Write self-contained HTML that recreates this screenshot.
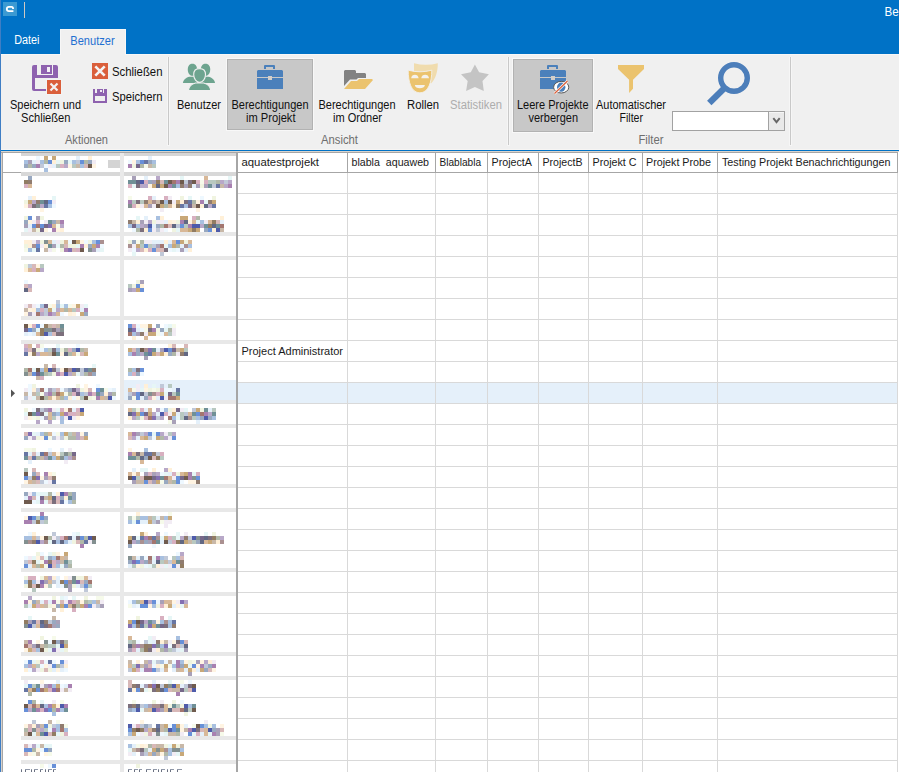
<!DOCTYPE html>
<html><head><meta charset="utf-8"><style>
html,body{margin:0;padding:0;background:#fff;overflow:hidden;width:899px;height:772px}
svg{display:block;font-family:'Liberation Sans', sans-serif}
text{font-family:'Liberation Sans', sans-serif}
</style></head><body>
<svg width="899" height="772" viewBox="0 0 899 772">
<rect x="0" y="0" width="899" height="772" fill="#ffffff" />
<rect x="0" y="0" width="899" height="54" fill="#0072C6" />
<rect x="0" y="54" width="899" height="96" fill="#F0F0F0" />
<rect x="0" y="54" width="899" height="1" fill="#F7F7F7" />
<rect x="0" y="149" width="899" height="1" fill="#F7F5F3" />
<rect x="0" y="150" width="899" height="1" fill="#0072C6" />
<rect x="0" y="151" width="899" height="1" fill="#DAD4CE" />
<rect x="0" y="0" width="1" height="772" fill="#3F7EC4" />
<rect x="3" y="2" width="14" height="14" fill="#3C9AD2" />
<path d="M13.4 11.1 H9 Q6.8 11.1 6.8 8.95 Q6.8 6.8 9 6.8 H11.6 Q13.1 6.8 13.1 8.9" fill="none" stroke="#fff" stroke-width="1.8"/>
<rect x="24" y="2" width="1" height="16" fill="#CFC8C2" />
<text x="884.5" y="16" font-size="12" fill="#ffffff" textLength="81" lengthAdjust="spacingAndGlyphs" >Berechtigungen</text>
<text x="14.3" y="44" font-size="12" fill="#ffffff" textLength="25.2" lengthAdjust="spacingAndGlyphs" >Datei</text>
<rect x="60" y="29" width="66" height="25" fill="#F7F7F7" />
<rect x="61" y="30" width="64" height="25" fill="#F0F0F0" />
<text x="70.3" y="45" font-size="12" fill="#1F6FD0" textLength="44.3" lengthAdjust="spacingAndGlyphs" >Benutzer</text>
<g>
<path d="M32 67 Q32 65 34 65 H37 V75 H53 V65 H56 Q58 65 58 67 V79 H47 V89 H35 V78 H58 V79 H47 V91 H34 Q32 91 32 89 Z" fill="#8E62AF" fill-rule="evenodd"/>
<rect x="41" y="65" width="11" height="9" fill="#8E62AF"/>
<rect x="47" y="67" width="3" height="5" fill="#F4F0F6"/>
<rect x="46" y="79" width="16" height="16" fill="#F3F3F3"/>
<rect x="47" y="80" width="14" height="14" fill="#DA5F3B"/>
<path d="M50.5 83.5 L57.5 90.5 M57.5 83.5 L50.5 90.5" stroke="#F2F2F2" stroke-width="2.2"/>
</g>
<text x="10" y="109" font-size="12" fill="#111111" textLength="71" lengthAdjust="spacingAndGlyphs" >Speichern und</text>
<text x="21" y="122" font-size="12" fill="#111111" textLength="49.5" lengthAdjust="spacingAndGlyphs" >Schließen</text>
<rect x="92" y="63" width="16" height="16" fill="#DA5F3B"/>
<path d="M95.3 66.3 L104.7 75.7 M104.7 66.3 L95.3 75.7" stroke="#F4F4F4" stroke-width="2.6"/>
<text x="112" y="76" font-size="12" fill="#111111" textLength="50.5" lengthAdjust="spacingAndGlyphs" >Schließen</text>
<path d="M93 89 H107 V103 H93 Z M95 96 V101 H105 V96 Z" fill="#8E62AF" fill-rule="evenodd"/>
<rect x="95" y="89" width="2" height="4" fill="#F0F0F0"/>
<rect x="103" y="89" width="1" height="4" fill="#F0F0F0"/>
<rect x="100" y="90" width="2" height="2" fill="#F0EAF4"/>
<text x="112" y="101" font-size="12" fill="#111111" textLength="50.5" lengthAdjust="spacingAndGlyphs" >Speichern</text>
<text x="65" y="144" font-size="12" fill="#6E6E6E" textLength="43" lengthAdjust="spacingAndGlyphs" >Aktionen</text>
<rect x="167" y="57" width="3" height="89" fill="#F6F6F6" />
<rect x="168" y="57" width="1" height="88" fill="#C9C9C9" />
<g fill="#6DA48F">
<path d="M187.8 69.5 C187.8 65.5 190 63.8 192.4 63.8 C194.8 63.8 197 65.5 197 69.5 C197 73.5 194.8 75.8 192.4 75.8 C190 75.8 187.8 73.5 187.8 69.5 Z"/>
<path d="M200.9 69.5 C200.9 65.5 203.1 63.8 205.5 63.8 C207.9 63.8 210.2 65.5 210.2 69.5 C210.2 73.5 207.9 75.8 205.5 75.8 C203.1 75.8 200.9 73.5 200.9 69.5 Z"/>
<path d="M182.9 83 C183.3 79.5 186 77.5 189.5 76.7 L195 76.7 L197.5 83 Z"/>
<path d="M215 83 C214.6 79.5 211.9 77.5 208.4 76.7 L203 76.7 L200.5 83 Z"/>
</g>
<g stroke="#F0F0F0" stroke-width="1.1" fill="#6DA48F">
<path d="M193.7 74.5 C193.7 70.5 196.3 68.6 199.6 68.6 C202.9 68.6 205.5 70.5 205.5 74.5 C205.5 79 202.6 82.2 199.6 82.2 C196.6 82.2 193.7 79 193.7 74.5 Z"/>
<path d="M188.4 90.6 C188.8 86.5 191.5 84 195.5 83 L203.7 83 C207.7 84 210.4 86.5 210.8 90.6 Z"/>
</g>
<text x="177" y="109" font-size="12" fill="#111111" textLength="44" lengthAdjust="spacingAndGlyphs" >Benutzer</text>
<rect x="226" y="58" width="88" height="73" fill="#F8F8F8" />
<rect x="227" y="59" width="86" height="71" fill="#B2B2B2" />
<rect x="228" y="60" width="84" height="69" fill="#C8C8C8" />
<g fill="#4B80BB">
<path d="M264 69 V66 Q264 65 265 65 H274 Q275 65 275 66 V69 H273 V67 H266 V69 Z"/>
<path d="M257 71 L258 70 H282 L283 71 V77 H257 Z"/>
<rect x="257" y="78" width="26" height="11"/>
</g>
<rect x="268" y="76" width="4" height="4" fill="#D3CEC9"/>
<text x="231.5" y="109" font-size="12" fill="#111111" textLength="77" lengthAdjust="spacingAndGlyphs" >Berechtigungen</text>
<text x="246" y="122" font-size="12" fill="#111111" textLength="49.5" lengthAdjust="spacingAndGlyphs" >im Projekt</text>
<path d="M344 71 L345 70 H355 L356 71 V73 H365 L366 74 V78 H358 L356.5 79.5 H350 L344 86 Z" fill="#828282"/>
<path d="M344 89 L351 81 H357 L359 79 H372 L373 80 L365 89 Z" fill="#EBC36E"/>
<text x="318.5" y="109" font-size="12" fill="#111111" textLength="77" lengthAdjust="spacingAndGlyphs" >Berechtigungen</text>
<text x="333" y="122" font-size="12" fill="#111111" textLength="49" lengthAdjust="spacingAndGlyphs" >im Ordner</text>
<path d="M414 63.2 Q426 66.3 437.8 63.2 C437.8 72 435.5 79 431 83.5 L424 72 L414 71 Z" fill="#F0DCAE"/>
<path d="M408.2 70.2 Q420 73.4 431.8 70.2 C431.8 82 428.5 92.8 419.9 92.8 C411.3 92.8 408.2 82 408.2 70.2 Z" fill="#EBC36E" stroke="#F2EFEA" stroke-width="0.9"/>
<path d="M411.2 78.2 C411.4 73.6 418.4 73.6 418.6 78.2 Z M421.3 78.2 C421.5 73.6 428.8 73.6 429 78.2 Z M414.8 85 H424.9 C424.6 89.4 415.1 89.4 414.8 85 Z" fill="#F5F2EC"/>
<text x="407" y="109" font-size="12" fill="#111111" textLength="32" lengthAdjust="spacingAndGlyphs" >Rollen</text>
<path d="M474.9 64.5 L479.1 72.2 L488.9 74.3 L482.5 81 L483.8 90.9 L474.9 87 L466.1 90.9 L467.7 81 L461 74.3 L470.8 72.2 Z" fill="#C4C4C4"/>
<text x="450" y="109" font-size="12" fill="#ADADAD" textLength="52" lengthAdjust="spacingAndGlyphs" >Statistiken</text>
<text x="321" y="144" font-size="12" fill="#6E6E6E" textLength="37" lengthAdjust="spacingAndGlyphs" >Ansicht</text>
<rect x="507" y="57" width="3" height="89" fill="#F6F6F6" />
<rect x="508" y="57" width="1" height="88" fill="#C9C9C9" />
<rect x="512" y="58" width="82" height="75" fill="#F8F8F8" />
<rect x="513" y="59" width="80" height="73" fill="#B2B2B2" />
<rect x="514" y="60" width="78" height="71" fill="#C8C8C8" />
<g fill="#4B80BB">
<path d="M547 69 V66 Q547 65 548 65 H557 Q558 65 558 66 V69 H556 V67 H549 V69 Z"/>
<path d="M540 71 L541 70 H565 L566 71 V77 H540 Z"/>
<rect x="540" y="78" width="26" height="11"/>
</g>
<rect x="551" y="76" width="4" height="4" fill="#D3CEC9"/>
<ellipse cx="561.2" cy="87.2" rx="7.6" ry="5.8" fill="#FFFFFF" stroke="#5A5A5A" stroke-width="1"/>
<ellipse cx="561.2" cy="87.2" rx="4.2" ry="4.6" fill="#4B80BB"/>
<path d="M554.5 93.5 L567.5 81" stroke="#FFFFFF" stroke-width="2.6"/>
<path d="M554.5 93.5 L567.5 81" stroke="#D9603B" stroke-width="1.3"/>
<text x="517" y="109" font-size="12" fill="#111111" textLength="71.5" lengthAdjust="spacingAndGlyphs" >Leere Projekte</text>
<text x="528.5" y="122" font-size="12" fill="#111111" textLength="49.5" lengthAdjust="spacingAndGlyphs" >verbergen</text>
<path d="M618 64.9 H644 V68.9 L633 79.8 V88.7 L629.1 92.9 V79.8 L618 68.9 Z" fill="#EBC36E"/>
<text x="596" y="109" font-size="12" fill="#111111" textLength="70" lengthAdjust="spacingAndGlyphs" >Automatischer</text>
<text x="619.5" y="122" font-size="12" fill="#111111" textLength="23.5" lengthAdjust="spacingAndGlyphs" >Filter</text>
<circle cx="734" cy="78" r="13.3" fill="none" stroke="#4C7EBA" stroke-width="5.4"/>
<path d="M724 88.5 L709.3 103" stroke="#4C7EBA" stroke-width="6.3"/>
<rect x="672.5" y="111.5" width="112" height="19" fill="#FFFFFF" stroke="#A2A2A2" stroke-width="1"/>
<rect x="769" y="112" width="15" height="18" fill="#E9E9E9"/>
<rect x="769" y="112" width="15" height="1" fill="#F6F6F6"/>
<rect x="768" y="111" width="1" height="20" fill="#A2A2A2"/>
<path d="M773.3 118.2 L776.5 122.2 L779.7 118.2" fill="none" stroke="#666" stroke-width="1.9"/>
<text x="638.5" y="144" font-size="12" fill="#6E6E6E" textLength="25" lengthAdjust="spacingAndGlyphs" >Filter</text>
<rect x="789" y="57" width="3" height="89" fill="#F6F6F6" />
<rect x="790" y="57" width="1" height="88" fill="#C9C9C9" />
<rect x="1" y="152" width="1" height="620" fill="#D8D2CC" />
<rect x="2" y="152" width="1" height="620" fill="#A6A6A6" />
<rect x="1" y="152" width="898" height="1" fill="#A6A6A6" />
<rect x="238" y="193" width="659" height="1" fill="#D9D9D9" />
<rect x="238" y="214" width="659" height="1" fill="#D9D9D9" />
<rect x="238" y="235" width="659" height="1" fill="#D9D9D9" />
<rect x="238" y="256" width="659" height="1" fill="#D9D9D9" />
<rect x="238" y="277" width="659" height="1" fill="#D9D9D9" />
<rect x="238" y="298" width="659" height="1" fill="#D9D9D9" />
<rect x="238" y="319" width="659" height="1" fill="#D9D9D9" />
<rect x="238" y="340" width="659" height="1" fill="#D9D9D9" />
<rect x="238" y="361" width="659" height="1" fill="#D9D9D9" />
<rect x="238" y="382" width="659" height="1" fill="#D9D9D9" />
<rect x="238" y="403" width="659" height="1" fill="#D9D9D9" />
<rect x="238" y="424" width="659" height="1" fill="#D9D9D9" />
<rect x="238" y="445" width="659" height="1" fill="#D9D9D9" />
<rect x="238" y="466" width="659" height="1" fill="#D9D9D9" />
<rect x="238" y="487" width="659" height="1" fill="#D9D9D9" />
<rect x="238" y="508" width="659" height="1" fill="#D9D9D9" />
<rect x="238" y="529" width="659" height="1" fill="#D9D9D9" />
<rect x="238" y="550" width="659" height="1" fill="#D9D9D9" />
<rect x="238" y="571" width="659" height="1" fill="#D9D9D9" />
<rect x="238" y="592" width="659" height="1" fill="#D9D9D9" />
<rect x="238" y="613" width="659" height="1" fill="#D9D9D9" />
<rect x="238" y="634" width="659" height="1" fill="#D9D9D9" />
<rect x="238" y="655" width="659" height="1" fill="#D9D9D9" />
<rect x="238" y="676" width="659" height="1" fill="#D9D9D9" />
<rect x="238" y="697" width="659" height="1" fill="#D9D9D9" />
<rect x="238" y="718" width="659" height="1" fill="#D9D9D9" />
<rect x="238" y="739" width="659" height="1" fill="#D9D9D9" />
<rect x="238" y="760" width="659" height="1" fill="#D9D9D9" />
<rect x="238" y="383" width="659" height="20" fill="#E5F0FA" />
<rect x="347" y="173" width="1" height="599" fill="#D9D9D9" />
<rect x="435" y="173" width="1" height="599" fill="#D9D9D9" />
<rect x="487" y="173" width="1" height="599" fill="#D9D9D9" />
<rect x="538" y="173" width="1" height="599" fill="#D9D9D9" />
<rect x="588" y="173" width="1" height="599" fill="#D9D9D9" />
<rect x="642" y="173" width="1" height="599" fill="#D9D9D9" />
<rect x="717" y="173" width="1" height="599" fill="#D9D9D9" />
<rect x="897" y="173" width="1" height="599" fill="#D9D9D9" />
<rect x="238" y="172" width="660" height="1" fill="#A6A6A6" />
<rect x="347" y="153" width="1" height="20" fill="#A6A6A6" />
<rect x="435" y="153" width="1" height="20" fill="#A6A6A6" />
<rect x="487" y="153" width="1" height="20" fill="#A6A6A6" />
<rect x="538" y="153" width="1" height="20" fill="#A6A6A6" />
<rect x="588" y="153" width="1" height="20" fill="#A6A6A6" />
<rect x="642" y="153" width="1" height="20" fill="#A6A6A6" />
<rect x="717" y="153" width="1" height="20" fill="#A6A6A6" />
<rect x="897" y="153" width="1" height="20" fill="#A6A6A6" />
<rect x="236" y="153" width="2" height="619" fill="#A6A6A6" />
<text x="241.5" y="166" font-size="11" fill="#1A1A1A" textLength="77.5" lengthAdjust="spacingAndGlyphs" >aquatestprojekt</text>
<text x="351.5" y="166" font-size="11" fill="#1A1A1A" textLength="77.5" lengthAdjust="spacingAndGlyphs" >blabla  aquaweb</text>
<text x="439.5" y="166" font-size="11" fill="#1A1A1A" textLength="41.5" lengthAdjust="spacingAndGlyphs" >Blablabla</text>
<text x="491.5" y="166" font-size="11" fill="#1A1A1A" textLength="40.5" lengthAdjust="spacingAndGlyphs" >ProjectA</text>
<text x="542.5" y="166" font-size="11" fill="#1A1A1A" textLength="40" lengthAdjust="spacingAndGlyphs" >ProjectB</text>
<text x="592.5" y="166" font-size="11" fill="#1A1A1A" textLength="44" lengthAdjust="spacingAndGlyphs" >Projekt C</text>
<text x="646" y="166" font-size="11" fill="#1A1A1A" textLength="65" lengthAdjust="spacingAndGlyphs" >Projekt Probe</text>
<text x="722" y="166" font-size="11" fill="#1A1A1A" textLength="168.5" lengthAdjust="spacingAndGlyphs" >Testing Projekt Benachrichtigungen</text>
<text x="241.5" y="355" font-size="11" fill="#1A1A1A" textLength="101.5" lengthAdjust="spacingAndGlyphs" >Project Administrator</text>
<rect x="898" y="152" width="1" height="620" fill="#FFFFFF" />
<rect x="21" y="153" width="215" height="3" fill="#D6D6D6" />
<rect x="3" y="172" width="18" height="1" fill="#A8A8A8" />
<rect x="21" y="172" width="215" height="4" fill="#D8D8D8" />
<rect x="21" y="232" width="215" height="4" fill="#E8E8E8" />
<rect x="21" y="256" width="215" height="4" fill="#E8E8E8" />
<rect x="21" y="316" width="215" height="4" fill="#E8E8E8" />
<rect x="21" y="340" width="215" height="4" fill="#E8E8E8" />
<rect x="21" y="400" width="215" height="4" fill="#E8E8E8" />
<rect x="21" y="424" width="215" height="4" fill="#E8E8E8" />
<rect x="21" y="484" width="215" height="4" fill="#E8E8E8" />
<rect x="21" y="508" width="215" height="4" fill="#E8E8E8" />
<rect x="21" y="568" width="215" height="4" fill="#E8E8E8" />
<rect x="21" y="592" width="215" height="4" fill="#E8E8E8" />
<rect x="21" y="652" width="215" height="4" fill="#E8E8E8" />
<rect x="21" y="676" width="215" height="4" fill="#E8E8E8" />
<rect x="21" y="736" width="215" height="4" fill="#E8E8E8" />
<rect x="21" y="760" width="215" height="4" fill="#E8E8E8" />
<rect x="120" y="153" width="4" height="619" fill="#E9E9E9" />
<rect x="124" y="380" width="112" height="20" fill="#E5F0FA" />
<path d="M11 389.5 L15 393.3 L11 397.2 Z" fill="#555555"/>
<rect x="36" y="156" width="4" height="4" fill="#EEF8FF" />
<rect x="44" y="156" width="4" height="4" fill="#C8A878" />
<rect x="52" y="156" width="4" height="4" fill="#C8A878" />
<rect x="76" y="156" width="4" height="4" fill="#E4F0FA" />
<rect x="88" y="156" width="4" height="4" fill="#FFF0D8" />
<rect x="24" y="160" width="4" height="4" fill="#A8C0E0" />
<rect x="28" y="160" width="4" height="4" fill="#A8A0B8" />
<rect x="32" y="160" width="4" height="4" fill="#E4F0FA" />
<rect x="36" y="160" width="4" height="4" fill="#F2ECF4" />
<rect x="40" y="160" width="4" height="4" fill="#A8C0E0" />
<rect x="44" y="160" width="4" height="4" fill="#B0B8A8" />
<rect x="48" y="160" width="4" height="4" fill="#6890D8" />
<rect x="52" y="160" width="4" height="4" fill="#FFF0D8" />
<rect x="56" y="160" width="4" height="4" fill="#E6F6F6" />
<rect x="60" y="160" width="4" height="4" fill="#F0F4E0" />
<rect x="64" y="160" width="4" height="4" fill="#98A8C0" />
<rect x="68" y="160" width="4" height="4" fill="#E6F6F6" />
<rect x="72" y="160" width="4" height="4" fill="#A8C0E0" />
<rect x="76" y="160" width="4" height="4" fill="#C0C8D8" />
<rect x="80" y="160" width="4" height="4" fill="#6890D8" />
<rect x="84" y="160" width="4" height="4" fill="#B0B8A8" />
<rect x="88" y="160" width="4" height="4" fill="#98A8C0" />
<rect x="92" y="160" width="4" height="4" fill="#F2ECF4" />
<rect x="24" y="164" width="4" height="4" fill="#98A8C0" />
<rect x="28" y="164" width="4" height="4" fill="#B0B8A8" />
<rect x="32" y="164" width="4" height="4" fill="#98A8C0" />
<rect x="36" y="164" width="4" height="4" fill="#A880B0" />
<rect x="40" y="164" width="4" height="4" fill="#C0C8D8" />
<rect x="44" y="164" width="4" height="4" fill="#EEF8FF" />
<rect x="48" y="164" width="4" height="4" fill="#F2ECF4" />
<rect x="52" y="164" width="4" height="4" fill="#E4F0FA" />
<rect x="56" y="164" width="4" height="4" fill="#B8C8C0" />
<rect x="60" y="164" width="4" height="4" fill="#D8B0C0" />
<rect x="64" y="164" width="4" height="4" fill="#B8A8C8" />
<rect x="68" y="164" width="4" height="4" fill="#FFF4E2" />
<rect x="72" y="164" width="4" height="4" fill="#B8C8C0" />
<rect x="76" y="164" width="4" height="4" fill="#C8B8A8" />
<rect x="80" y="164" width="4" height="4" fill="#A8C0E0" />
<rect x="84" y="164" width="4" height="4" fill="#D8B8B8" />
<rect x="88" y="164" width="4" height="4" fill="#6F5B4E" />
<rect x="92" y="164" width="4" height="4" fill="#FFF4E2" />
<rect x="44" y="168" width="4" height="4" fill="#A8C0E0" />
<rect x="108" y="160" width="12" height="8" fill="#D4D4D4" />
<rect x="148" y="156" width="4" height="4" fill="#E4F0FA" />
<rect x="128" y="160" width="4" height="4" fill="#EEF8FF" />
<rect x="132" y="160" width="4" height="4" fill="#FFF4E2" />
<rect x="136" y="160" width="4" height="4" fill="#A8C0E0" />
<rect x="140" y="160" width="4" height="4" fill="#6890D8" />
<rect x="144" y="160" width="4" height="4" fill="#6876A3" />
<rect x="148" y="160" width="4" height="4" fill="#98A8C0" />
<rect x="152" y="160" width="4" height="4" fill="#A8C0E0" />
<rect x="128" y="164" width="4" height="4" fill="#A880B0" />
<rect x="132" y="164" width="4" height="4" fill="#F0F4E0" />
<rect x="136" y="164" width="4" height="4" fill="#766889" />
<rect x="140" y="164" width="4" height="4" fill="#B0B8A8" />
<rect x="144" y="164" width="4" height="4" fill="#F6FAEA" />
<rect x="148" y="164" width="4" height="4" fill="#C8B8A8" />
<rect x="152" y="164" width="4" height="4" fill="#B8C8C0" />
<rect x="28" y="176" width="4" height="4" fill="#98A8C0" />
<rect x="24" y="180" width="4" height="4" fill="#917C62" />
<rect x="28" y="180" width="4" height="4" fill="#907C6F" />
<rect x="24" y="184" width="4" height="4" fill="#D8B0C0" />
<rect x="28" y="184" width="4" height="4" fill="#D8B898" />
<rect x="132" y="176" width="4" height="4" fill="#A8A0B8" />
<rect x="144" y="176" width="4" height="4" fill="#E4F0FA" />
<rect x="156" y="176" width="4" height="4" fill="#B8A8C8" />
<rect x="180" y="176" width="4" height="4" fill="#E6F6F6" />
<rect x="204" y="176" width="4" height="4" fill="#D8B898" />
<rect x="228" y="176" width="4" height="4" fill="#E6F6F6" />
<rect x="128" y="180" width="4" height="4" fill="#6F9096" />
<rect x="132" y="180" width="4" height="4" fill="#6F9096" />
<rect x="136" y="180" width="4" height="4" fill="#626883" />
<rect x="140" y="180" width="4" height="4" fill="#4E5BAA" />
<rect x="144" y="180" width="4" height="4" fill="#D8B0C0" />
<rect x="148" y="180" width="4" height="4" fill="#98A8C0" />
<rect x="152" y="180" width="4" height="4" fill="#A8A0B8" />
<rect x="156" y="180" width="4" height="4" fill="#917C62" />
<rect x="160" y="180" width="4" height="4" fill="#D8B8B8" />
<rect x="164" y="180" width="4" height="4" fill="#6F9096" />
<rect x="168" y="180" width="4" height="4" fill="#6F5B4E" />
<rect x="172" y="180" width="4" height="4" fill="#A3766F" />
<rect x="176" y="180" width="4" height="4" fill="#A880B0" />
<rect x="180" y="180" width="4" height="4" fill="#6F5B4E" />
<rect x="184" y="180" width="4" height="4" fill="#C0C8D8" />
<rect x="188" y="180" width="4" height="4" fill="#7C6F7C" />
<rect x="192" y="180" width="4" height="4" fill="#6F5B4E" />
<rect x="196" y="180" width="4" height="4" fill="#D8B0C0" />
<rect x="200" y="180" width="4" height="4" fill="#F6FAEA" />
<rect x="204" y="180" width="4" height="4" fill="#D8B0C0" />
<rect x="208" y="180" width="4" height="4" fill="#B8C8C0" />
<rect x="212" y="180" width="4" height="4" fill="#B8C8C0" />
<rect x="216" y="180" width="4" height="4" fill="#B0B8A8" />
<rect x="220" y="180" width="4" height="4" fill="#B8A8C8" />
<rect x="224" y="180" width="4" height="4" fill="#C0C8D8" />
<rect x="228" y="180" width="4" height="4" fill="#B8A8C8" />
<rect x="128" y="184" width="4" height="4" fill="#D8B0C0" />
<rect x="132" y="184" width="4" height="4" fill="#E6F6F6" />
<rect x="136" y="184" width="4" height="4" fill="#7C6F7C" />
<rect x="140" y="184" width="4" height="4" fill="#B8A8C8" />
<rect x="144" y="184" width="4" height="4" fill="#B8A8C8" />
<rect x="148" y="184" width="4" height="4" fill="#FFF4E2" />
<rect x="152" y="184" width="4" height="4" fill="#C8A878" />
<rect x="156" y="184" width="4" height="4" fill="#626883" />
<rect x="160" y="184" width="4" height="4" fill="#C8A878" />
<rect x="164" y="184" width="4" height="4" fill="#6F5B4E" />
<rect x="168" y="184" width="4" height="4" fill="#A880B0" />
<rect x="172" y="184" width="4" height="4" fill="#6F9096" />
<rect x="176" y="184" width="4" height="4" fill="#A8C0E0" />
<rect x="180" y="184" width="4" height="4" fill="#907C6F" />
<rect x="184" y="184" width="4" height="4" fill="#A8A0B8" />
<rect x="188" y="184" width="4" height="4" fill="#907C6F" />
<rect x="192" y="184" width="4" height="4" fill="#E4F0FA" />
<rect x="196" y="184" width="4" height="4" fill="#A8A0B8" />
<rect x="200" y="184" width="4" height="4" fill="#F0F4E0" />
<rect x="204" y="184" width="4" height="4" fill="#A8A0B8" />
<rect x="208" y="184" width="4" height="4" fill="#6F9096" />
<rect x="212" y="184" width="4" height="4" fill="#C0C8D8" />
<rect x="216" y="184" width="4" height="4" fill="#6876A3" />
<rect x="220" y="184" width="4" height="4" fill="#C8B8A8" />
<rect x="224" y="184" width="4" height="4" fill="#B8A8C8" />
<rect x="228" y="184" width="4" height="4" fill="#A880B0" />
<rect x="28" y="196" width="4" height="4" fill="#E4F0FA" />
<rect x="32" y="196" width="4" height="4" fill="#FFF0D8" />
<rect x="52" y="196" width="4" height="4" fill="#E6F6F6" />
<rect x="24" y="200" width="4" height="4" fill="#F0F4E0" />
<rect x="28" y="200" width="4" height="4" fill="#C8A878" />
<rect x="32" y="200" width="4" height="4" fill="#B8A8C8" />
<rect x="36" y="200" width="4" height="4" fill="#907C6F" />
<rect x="40" y="200" width="4" height="4" fill="#6F9096" />
<rect x="44" y="200" width="4" height="4" fill="#626883" />
<rect x="48" y="200" width="4" height="4" fill="#6890D8" />
<rect x="52" y="200" width="4" height="4" fill="#F2ECF4" />
<rect x="24" y="204" width="4" height="4" fill="#FFF4E2" />
<rect x="28" y="204" width="4" height="4" fill="#D8B0C0" />
<rect x="32" y="204" width="4" height="4" fill="#7C6F7C" />
<rect x="36" y="204" width="4" height="4" fill="#839090" />
<rect x="40" y="204" width="4" height="4" fill="#B8A8C8" />
<rect x="44" y="204" width="4" height="4" fill="#6876A3" />
<rect x="48" y="204" width="4" height="4" fill="#A8C0E0" />
<rect x="52" y="204" width="4" height="4" fill="#EEF8FF" />
<rect x="40" y="208" width="4" height="4" fill="#FFF4E2" />
<rect x="128" y="196" width="4" height="4" fill="#F6FAEA" />
<rect x="148" y="196" width="4" height="4" fill="#D8B0C0" />
<rect x="152" y="196" width="4" height="4" fill="#E4F0FA" />
<rect x="164" y="196" width="4" height="4" fill="#D8B0C0" />
<rect x="168" y="196" width="4" height="4" fill="#F2ECF4" />
<rect x="180" y="196" width="4" height="4" fill="#F0F4E0" />
<rect x="188" y="196" width="4" height="4" fill="#E6F6F6" />
<rect x="200" y="196" width="4" height="4" fill="#EEF8FF" />
<rect x="212" y="196" width="4" height="4" fill="#F0F4E0" />
<rect x="128" y="200" width="4" height="4" fill="#A880B0" />
<rect x="132" y="200" width="4" height="4" fill="#B8C8C0" />
<rect x="136" y="200" width="4" height="4" fill="#7C6F7C" />
<rect x="140" y="200" width="4" height="4" fill="#B8C8C0" />
<rect x="144" y="200" width="4" height="4" fill="#907C6F" />
<rect x="148" y="200" width="4" height="4" fill="#D8B898" />
<rect x="152" y="200" width="4" height="4" fill="#AA9090" />
<rect x="156" y="200" width="4" height="4" fill="#C8B8A8" />
<rect x="160" y="200" width="4" height="4" fill="#6F5B4E" />
<rect x="164" y="200" width="4" height="4" fill="#A8C0E0" />
<rect x="168" y="200" width="4" height="4" fill="#6F5B4E" />
<rect x="172" y="200" width="4" height="4" fill="#F2ECF4" />
<rect x="176" y="200" width="4" height="4" fill="#C8A878" />
<rect x="180" y="200" width="4" height="4" fill="#FFF0D8" />
<rect x="184" y="200" width="4" height="4" fill="#7C6F7C" />
<rect x="188" y="200" width="4" height="4" fill="#6876A3" />
<rect x="192" y="200" width="4" height="4" fill="#B0B8A8" />
<rect x="196" y="200" width="4" height="4" fill="#FFF4E2" />
<rect x="200" y="200" width="4" height="4" fill="#A880B0" />
<rect x="204" y="200" width="4" height="4" fill="#E6F6F6" />
<rect x="208" y="200" width="4" height="4" fill="#907C6F" />
<rect x="212" y="200" width="4" height="4" fill="#C8A878" />
<rect x="128" y="204" width="4" height="4" fill="#839090" />
<rect x="132" y="204" width="4" height="4" fill="#D8B0C0" />
<rect x="136" y="204" width="4" height="4" fill="#FFF0D8" />
<rect x="140" y="204" width="4" height="4" fill="#F2ECF4" />
<rect x="144" y="204" width="4" height="4" fill="#D8B898" />
<rect x="148" y="204" width="4" height="4" fill="#A8A0B8" />
<rect x="152" y="204" width="4" height="4" fill="#F2ECF4" />
<rect x="156" y="204" width="4" height="4" fill="#6F5B4E" />
<rect x="160" y="204" width="4" height="4" fill="#C8A878" />
<rect x="164" y="204" width="4" height="4" fill="#B0B8A8" />
<rect x="168" y="204" width="4" height="4" fill="#D8B898" />
<rect x="172" y="204" width="4" height="4" fill="#FFF4E2" />
<rect x="176" y="204" width="4" height="4" fill="#917C62" />
<rect x="180" y="204" width="4" height="4" fill="#6876A3" />
<rect x="184" y="204" width="4" height="4" fill="#A8C0E0" />
<rect x="188" y="204" width="4" height="4" fill="#766889" />
<rect x="192" y="204" width="4" height="4" fill="#C8B8A8" />
<rect x="196" y="204" width="4" height="4" fill="#6F5B4E" />
<rect x="200" y="204" width="4" height="4" fill="#FFF0D8" />
<rect x="204" y="204" width="4" height="4" fill="#626883" />
<rect x="208" y="204" width="4" height="4" fill="#B8A8C8" />
<rect x="212" y="204" width="4" height="4" fill="#6876A3" />
<rect x="160" y="208" width="4" height="4" fill="#F2ECF4" />
<rect x="180" y="208" width="4" height="4" fill="#EEF8FF" />
<rect x="196" y="208" width="4" height="4" fill="#FFF4E2" />
<rect x="24" y="216" width="4" height="4" fill="#F0F4E0" />
<rect x="28" y="216" width="4" height="4" fill="#6890D8" />
<rect x="36" y="216" width="4" height="4" fill="#A8A0B8" />
<rect x="40" y="216" width="4" height="4" fill="#F0F4E0" />
<rect x="24" y="220" width="4" height="4" fill="#98A8C0" />
<rect x="28" y="220" width="4" height="4" fill="#FFF4E2" />
<rect x="32" y="220" width="4" height="4" fill="#F2ECF4" />
<rect x="36" y="220" width="4" height="4" fill="#D8B0C0" />
<rect x="44" y="220" width="4" height="4" fill="#F2ECF4" />
<rect x="48" y="220" width="4" height="4" fill="#6F9096" />
<rect x="52" y="220" width="4" height="4" fill="#98A8C0" />
<rect x="56" y="220" width="4" height="4" fill="#C8B8A8" />
<rect x="60" y="220" width="4" height="4" fill="#A880B0" />
<rect x="24" y="224" width="4" height="4" fill="#A8A0B8" />
<rect x="28" y="224" width="4" height="4" fill="#E4F0FA" />
<rect x="32" y="224" width="4" height="4" fill="#6890D8" />
<rect x="36" y="224" width="4" height="4" fill="#A3766F" />
<rect x="40" y="224" width="4" height="4" fill="#6890D8" />
<rect x="44" y="224" width="4" height="4" fill="#766889" />
<rect x="48" y="224" width="4" height="4" fill="#836FB1" />
<rect x="52" y="224" width="4" height="4" fill="#D8B898" />
<rect x="56" y="224" width="4" height="4" fill="#F6FAEA" />
<rect x="60" y="224" width="4" height="4" fill="#B8A8C8" />
<rect x="24" y="228" width="4" height="4" fill="#E6F6F6" />
<rect x="28" y="228" width="4" height="4" fill="#F2ECF4" />
<rect x="32" y="228" width="4" height="4" fill="#C8B8A8" />
<rect x="36" y="228" width="4" height="4" fill="#F0F4E0" />
<rect x="40" y="228" width="4" height="4" fill="#766889" />
<rect x="44" y="228" width="4" height="4" fill="#FFF4E2" />
<rect x="52" y="228" width="4" height="4" fill="#A880B0" />
<rect x="56" y="228" width="4" height="4" fill="#FFF4E2" />
<rect x="60" y="228" width="4" height="4" fill="#FFF0D8" />
<rect x="136" y="216" width="4" height="4" fill="#E6F6F6" />
<rect x="144" y="216" width="4" height="4" fill="#E4F0FA" />
<rect x="156" y="216" width="4" height="4" fill="#A8C0E0" />
<rect x="160" y="216" width="4" height="4" fill="#FFF0D8" />
<rect x="180" y="216" width="4" height="4" fill="#C8A878" />
<rect x="184" y="216" width="4" height="4" fill="#C8A878" />
<rect x="192" y="216" width="4" height="4" fill="#D8B0C0" />
<rect x="196" y="216" width="4" height="4" fill="#B0B8A8" />
<rect x="220" y="216" width="4" height="4" fill="#FFF0D8" />
<rect x="128" y="220" width="4" height="4" fill="#907C6F" />
<rect x="132" y="220" width="4" height="4" fill="#C8B8A8" />
<rect x="136" y="220" width="4" height="4" fill="#FFF0D8" />
<rect x="140" y="220" width="4" height="4" fill="#A8A0B8" />
<rect x="144" y="220" width="4" height="4" fill="#F2ECF4" />
<rect x="148" y="220" width="4" height="4" fill="#B8A8C8" />
<rect x="152" y="220" width="4" height="4" fill="#F0F4E0" />
<rect x="156" y="220" width="4" height="4" fill="#F2ECF4" />
<rect x="160" y="220" width="4" height="4" fill="#F2ECF4" />
<rect x="164" y="220" width="4" height="4" fill="#E4F0FA" />
<rect x="168" y="220" width="4" height="4" fill="#FFF0D8" />
<rect x="172" y="220" width="4" height="4" fill="#FFF4E2" />
<rect x="176" y="220" width="4" height="4" fill="#F0F4E0" />
<rect x="180" y="220" width="4" height="4" fill="#A880B0" />
<rect x="184" y="220" width="4" height="4" fill="#626883" />
<rect x="188" y="220" width="4" height="4" fill="#FFF4E2" />
<rect x="192" y="220" width="4" height="4" fill="#D8B898" />
<rect x="196" y="220" width="4" height="4" fill="#E6F6F6" />
<rect x="200" y="220" width="4" height="4" fill="#A8C0E0" />
<rect x="204" y="220" width="4" height="4" fill="#F2ECF4" />
<rect x="208" y="220" width="4" height="4" fill="#D8B898" />
<rect x="212" y="220" width="4" height="4" fill="#917C62" />
<rect x="216" y="220" width="4" height="4" fill="#D8B8B8" />
<rect x="220" y="220" width="4" height="4" fill="#E4F0FA" />
<rect x="128" y="224" width="4" height="4" fill="#A8C0E0" />
<rect x="132" y="224" width="4" height="4" fill="#766889" />
<rect x="136" y="224" width="4" height="4" fill="#A8C0E0" />
<rect x="140" y="224" width="4" height="4" fill="#B8A8C8" />
<rect x="144" y="224" width="4" height="4" fill="#A8A0B8" />
<rect x="148" y="224" width="4" height="4" fill="#4E5BAA" />
<rect x="152" y="224" width="4" height="4" fill="#E4F0FA" />
<rect x="156" y="224" width="4" height="4" fill="#98A8C0" />
<rect x="160" y="224" width="4" height="4" fill="#B0B8A8" />
<rect x="164" y="224" width="4" height="4" fill="#A3766F" />
<rect x="168" y="224" width="4" height="4" fill="#D8B8B8" />
<rect x="172" y="224" width="4" height="4" fill="#626883" />
<rect x="176" y="224" width="4" height="4" fill="#C0C8D8" />
<rect x="180" y="224" width="4" height="4" fill="#6890D8" />
<rect x="184" y="224" width="4" height="4" fill="#B8C8C0" />
<rect x="188" y="224" width="4" height="4" fill="#A880B0" />
<rect x="192" y="224" width="4" height="4" fill="#4E5BAA" />
<rect x="196" y="224" width="4" height="4" fill="#4E5BAA" />
<rect x="200" y="224" width="4" height="4" fill="#B8A8C8" />
<rect x="204" y="224" width="4" height="4" fill="#6F9096" />
<rect x="208" y="224" width="4" height="4" fill="#917C62" />
<rect x="212" y="224" width="4" height="4" fill="#626883" />
<rect x="216" y="224" width="4" height="4" fill="#6F9096" />
<rect x="220" y="224" width="4" height="4" fill="#A3766F" />
<rect x="132" y="228" width="4" height="4" fill="#EEF8FF" />
<rect x="136" y="228" width="4" height="4" fill="#B0B8A8" />
<rect x="140" y="228" width="4" height="4" fill="#7C6F7C" />
<rect x="144" y="228" width="4" height="4" fill="#FFF0D8" />
<rect x="148" y="228" width="4" height="4" fill="#6890D8" />
<rect x="152" y="228" width="4" height="4" fill="#F2ECF4" />
<rect x="156" y="228" width="4" height="4" fill="#C0C8D8" />
<rect x="160" y="228" width="4" height="4" fill="#F2ECF4" />
<rect x="164" y="228" width="4" height="4" fill="#EEF8FF" />
<rect x="172" y="228" width="4" height="4" fill="#F0F4E0" />
<rect x="176" y="228" width="4" height="4" fill="#E6F6F6" />
<rect x="180" y="228" width="4" height="4" fill="#D8B898" />
<rect x="184" y="228" width="4" height="4" fill="#D8B898" />
<rect x="188" y="228" width="4" height="4" fill="#C8A878" />
<rect x="192" y="228" width="4" height="4" fill="#917C62" />
<rect x="196" y="228" width="4" height="4" fill="#C8A878" />
<rect x="204" y="228" width="4" height="4" fill="#98A8C0" />
<rect x="208" y="228" width="4" height="4" fill="#6890D8" />
<rect x="212" y="228" width="4" height="4" fill="#FFF0D8" />
<rect x="216" y="228" width="4" height="4" fill="#4E5BAA" />
<rect x="220" y="228" width="4" height="4" fill="#C8B8A8" />
<rect x="24" y="240" width="4" height="4" fill="#FFF0D8" />
<rect x="28" y="240" width="4" height="4" fill="#FFF0D8" />
<rect x="32" y="240" width="4" height="4" fill="#F2ECF4" />
<rect x="36" y="240" width="4" height="4" fill="#B8A8C8" />
<rect x="40" y="240" width="4" height="4" fill="#F0F4E0" />
<rect x="44" y="240" width="4" height="4" fill="#839090" />
<rect x="48" y="240" width="4" height="4" fill="#D8B898" />
<rect x="52" y="240" width="4" height="4" fill="#E4F0FA" />
<rect x="56" y="240" width="4" height="4" fill="#F2ECF4" />
<rect x="60" y="240" width="4" height="4" fill="#F0F4E0" />
<rect x="64" y="240" width="4" height="4" fill="#D8B898" />
<rect x="68" y="240" width="4" height="4" fill="#EEF8FF" />
<rect x="72" y="240" width="4" height="4" fill="#6F5B4E" />
<rect x="76" y="240" width="4" height="4" fill="#C8A878" />
<rect x="80" y="240" width="4" height="4" fill="#FFF4E2" />
<rect x="84" y="240" width="4" height="4" fill="#EEF8FF" />
<rect x="88" y="240" width="4" height="4" fill="#F0F4E0" />
<rect x="92" y="240" width="4" height="4" fill="#A8C0E0" />
<rect x="96" y="240" width="4" height="4" fill="#6890D8" />
<rect x="100" y="240" width="4" height="4" fill="#AA9090" />
<rect x="24" y="244" width="4" height="4" fill="#F0F4E0" />
<rect x="28" y="244" width="4" height="4" fill="#FFF0D8" />
<rect x="32" y="244" width="4" height="4" fill="#AA9090" />
<rect x="36" y="244" width="4" height="4" fill="#6890D8" />
<rect x="40" y="244" width="4" height="4" fill="#F2ECF4" />
<rect x="44" y="244" width="4" height="4" fill="#FFF0D8" />
<rect x="48" y="244" width="4" height="4" fill="#6F9096" />
<rect x="52" y="244" width="4" height="4" fill="#A8A0B8" />
<rect x="56" y="244" width="4" height="4" fill="#E6F6F6" />
<rect x="60" y="244" width="4" height="4" fill="#B0B8A8" />
<rect x="64" y="244" width="4" height="4" fill="#D8B8B8" />
<rect x="68" y="244" width="4" height="4" fill="#F0F4E0" />
<rect x="72" y="244" width="4" height="4" fill="#F0F4E0" />
<rect x="76" y="244" width="4" height="4" fill="#E6F6F6" />
<rect x="80" y="244" width="4" height="4" fill="#A880B0" />
<rect x="84" y="244" width="4" height="4" fill="#FFF0D8" />
<rect x="88" y="244" width="4" height="4" fill="#98A8C0" />
<rect x="92" y="244" width="4" height="4" fill="#C8A878" />
<rect x="96" y="244" width="4" height="4" fill="#A880B0" />
<rect x="100" y="244" width="4" height="4" fill="#EEF8FF" />
<rect x="24" y="248" width="4" height="4" fill="#F6FAEA" />
<rect x="28" y="248" width="4" height="4" fill="#A8C0E0" />
<rect x="32" y="248" width="4" height="4" fill="#E6F6F6" />
<rect x="36" y="248" width="4" height="4" fill="#6876A3" />
<rect x="44" y="248" width="4" height="4" fill="#C8B8A8" />
<rect x="48" y="248" width="4" height="4" fill="#F2ECF4" />
<rect x="52" y="248" width="4" height="4" fill="#F6FAEA" />
<rect x="60" y="248" width="4" height="4" fill="#F0F4E0" />
<rect x="64" y="248" width="4" height="4" fill="#A880B0" />
<rect x="68" y="248" width="4" height="4" fill="#836FB1" />
<rect x="72" y="248" width="4" height="4" fill="#D8B8B8" />
<rect x="76" y="248" width="4" height="4" fill="#D8B0C0" />
<rect x="80" y="248" width="4" height="4" fill="#6F5B4E" />
<rect x="88" y="248" width="4" height="4" fill="#839090" />
<rect x="92" y="248" width="4" height="4" fill="#A8A0B8" />
<rect x="96" y="248" width="4" height="4" fill="#E4F0FA" />
<rect x="100" y="248" width="4" height="4" fill="#E6F6F6" />
<rect x="128" y="240" width="4" height="4" fill="#F0F4E0" />
<rect x="132" y="240" width="4" height="4" fill="#98A8C0" />
<rect x="136" y="240" width="4" height="4" fill="#F6FAEA" />
<rect x="140" y="240" width="4" height="4" fill="#B0B8A8" />
<rect x="144" y="240" width="4" height="4" fill="#F2ECF4" />
<rect x="148" y="240" width="4" height="4" fill="#F2ECF4" />
<rect x="152" y="240" width="4" height="4" fill="#E4F0FA" />
<rect x="156" y="240" width="4" height="4" fill="#E4F0FA" />
<rect x="160" y="240" width="4" height="4" fill="#E4F0FA" />
<rect x="164" y="240" width="4" height="4" fill="#FFF0D8" />
<rect x="168" y="240" width="4" height="4" fill="#E4F0FA" />
<rect x="172" y="240" width="4" height="4" fill="#D8B898" />
<rect x="176" y="240" width="4" height="4" fill="#6890D8" />
<rect x="180" y="240" width="4" height="4" fill="#C8A878" />
<rect x="184" y="240" width="4" height="4" fill="#F0F4E0" />
<rect x="188" y="240" width="4" height="4" fill="#D8B898" />
<rect x="128" y="244" width="4" height="4" fill="#AA9090" />
<rect x="132" y="244" width="4" height="4" fill="#F2ECF4" />
<rect x="136" y="244" width="4" height="4" fill="#C8A878" />
<rect x="140" y="244" width="4" height="4" fill="#B8C8C0" />
<rect x="144" y="244" width="4" height="4" fill="#6890D8" />
<rect x="148" y="244" width="4" height="4" fill="#B8C8C0" />
<rect x="152" y="244" width="4" height="4" fill="#C0C8D8" />
<rect x="156" y="244" width="4" height="4" fill="#A8A0B8" />
<rect x="160" y="244" width="4" height="4" fill="#A3766F" />
<rect x="164" y="244" width="4" height="4" fill="#E6F6F6" />
<rect x="168" y="244" width="4" height="4" fill="#A8C0E0" />
<rect x="172" y="244" width="4" height="4" fill="#C8A878" />
<rect x="176" y="244" width="4" height="4" fill="#B0B8A8" />
<rect x="180" y="244" width="4" height="4" fill="#E4F0FA" />
<rect x="184" y="244" width="4" height="4" fill="#AA9090" />
<rect x="188" y="244" width="4" height="4" fill="#A8C0E0" />
<rect x="128" y="248" width="4" height="4" fill="#F2ECF4" />
<rect x="132" y="248" width="4" height="4" fill="#EEF8FF" />
<rect x="136" y="248" width="4" height="4" fill="#B8A8C8" />
<rect x="140" y="248" width="4" height="4" fill="#D8B8B8" />
<rect x="144" y="248" width="4" height="4" fill="#FFF0D8" />
<rect x="148" y="248" width="4" height="4" fill="#D8B0C0" />
<rect x="152" y="248" width="4" height="4" fill="#6890D8" />
<rect x="156" y="248" width="4" height="4" fill="#D8B8B8" />
<rect x="160" y="248" width="4" height="4" fill="#D8B8B8" />
<rect x="164" y="248" width="4" height="4" fill="#7C6F7C" />
<rect x="168" y="248" width="4" height="4" fill="#EEF8FF" />
<rect x="172" y="248" width="4" height="4" fill="#E6F6F6" />
<rect x="176" y="248" width="4" height="4" fill="#EEF8FF" />
<rect x="180" y="248" width="4" height="4" fill="#A8A0B8" />
<rect x="184" y="248" width="4" height="4" fill="#E4F0FA" />
<rect x="188" y="248" width="4" height="4" fill="#FFF0D8" />
<rect x="132" y="252" width="4" height="4" fill="#E6F6F6" />
<rect x="160" y="252" width="4" height="4" fill="#C0C8D8" />
<rect x="24" y="264" width="4" height="4" fill="#F0F4E0" />
<rect x="28" y="264" width="4" height="4" fill="#C0C8D8" />
<rect x="32" y="264" width="4" height="4" fill="#D8B8B8" />
<rect x="36" y="264" width="4" height="4" fill="#FFF4E2" />
<rect x="40" y="264" width="4" height="4" fill="#B8C8C0" />
<rect x="24" y="268" width="4" height="4" fill="#FFF0D8" />
<rect x="28" y="268" width="4" height="4" fill="#D8B898" />
<rect x="32" y="268" width="4" height="4" fill="#D8B0C0" />
<rect x="36" y="268" width="4" height="4" fill="#C8A878" />
<rect x="40" y="268" width="4" height="4" fill="#B8A8C8" />
<rect x="24" y="280" width="4" height="4" fill="#EEF8FF" />
<rect x="24" y="284" width="4" height="4" fill="#D8B8B8" />
<rect x="28" y="284" width="4" height="4" fill="#B8A8C8" />
<rect x="24" y="288" width="4" height="4" fill="#626883" />
<rect x="28" y="288" width="4" height="4" fill="#D8B8B8" />
<rect x="136" y="280" width="4" height="4" fill="#F0F4E0" />
<rect x="140" y="280" width="4" height="4" fill="#A8A0B8" />
<rect x="128" y="284" width="4" height="4" fill="#B8C8C0" />
<rect x="132" y="284" width="4" height="4" fill="#F0F4E0" />
<rect x="136" y="284" width="4" height="4" fill="#6890D8" />
<rect x="140" y="284" width="4" height="4" fill="#FFF0D8" />
<rect x="128" y="288" width="4" height="4" fill="#A8A0B8" />
<rect x="132" y="288" width="4" height="4" fill="#B8A8C8" />
<rect x="136" y="288" width="4" height="4" fill="#C8A878" />
<rect x="140" y="288" width="4" height="4" fill="#6890D8" />
<rect x="56" y="300" width="4" height="4" fill="#C0C8D8" />
<rect x="24" y="304" width="4" height="4" fill="#F2ECF4" />
<rect x="28" y="304" width="4" height="4" fill="#D8B8B8" />
<rect x="32" y="304" width="4" height="4" fill="#F2ECF4" />
<rect x="36" y="304" width="4" height="4" fill="#EEF8FF" />
<rect x="40" y="304" width="4" height="4" fill="#A8C0E0" />
<rect x="44" y="304" width="4" height="4" fill="#766889" />
<rect x="48" y="304" width="4" height="4" fill="#F6FAEA" />
<rect x="52" y="304" width="4" height="4" fill="#FFF0D8" />
<rect x="56" y="304" width="4" height="4" fill="#A8C0E0" />
<rect x="60" y="304" width="4" height="4" fill="#E6F6F6" />
<rect x="64" y="304" width="4" height="4" fill="#A8C0E0" />
<rect x="68" y="304" width="4" height="4" fill="#F6FAEA" />
<rect x="72" y="304" width="4" height="4" fill="#FFF4E2" />
<rect x="76" y="304" width="4" height="4" fill="#C8A878" />
<rect x="80" y="304" width="4" height="4" fill="#F2ECF4" />
<rect x="84" y="304" width="4" height="4" fill="#E6F6F6" />
<rect x="24" y="308" width="4" height="4" fill="#C8B8A8" />
<rect x="28" y="308" width="4" height="4" fill="#FFF4E2" />
<rect x="32" y="308" width="4" height="4" fill="#FFF0D8" />
<rect x="36" y="308" width="4" height="4" fill="#A8C0E0" />
<rect x="40" y="308" width="4" height="4" fill="#D8B0C0" />
<rect x="44" y="308" width="4" height="4" fill="#C0C8D8" />
<rect x="48" y="308" width="4" height="4" fill="#C8A878" />
<rect x="52" y="308" width="4" height="4" fill="#E6F6F6" />
<rect x="56" y="308" width="4" height="4" fill="#B8A8C8" />
<rect x="60" y="308" width="4" height="4" fill="#D8B898" />
<rect x="64" y="308" width="4" height="4" fill="#B0B8A8" />
<rect x="68" y="308" width="4" height="4" fill="#D8B898" />
<rect x="72" y="308" width="4" height="4" fill="#B8C8C0" />
<rect x="76" y="308" width="4" height="4" fill="#D8B0C0" />
<rect x="80" y="308" width="4" height="4" fill="#E4F0FA" />
<rect x="84" y="308" width="4" height="4" fill="#A880B0" />
<rect x="24" y="312" width="4" height="4" fill="#FFF4E2" />
<rect x="28" y="312" width="4" height="4" fill="#A8A0B8" />
<rect x="32" y="312" width="4" height="4" fill="#F2ECF4" />
<rect x="36" y="312" width="4" height="4" fill="#A3766F" />
<rect x="40" y="312" width="4" height="4" fill="#B8A8C8" />
<rect x="44" y="312" width="4" height="4" fill="#C0C8D8" />
<rect x="48" y="312" width="4" height="4" fill="#A880B0" />
<rect x="52" y="312" width="4" height="4" fill="#B8A8C8" />
<rect x="56" y="312" width="4" height="4" fill="#D8B898" />
<rect x="60" y="312" width="4" height="4" fill="#EEF8FF" />
<rect x="68" y="312" width="4" height="4" fill="#FFF0D8" />
<rect x="72" y="312" width="4" height="4" fill="#FFF4E2" />
<rect x="80" y="312" width="4" height="4" fill="#C8A878" />
<rect x="84" y="312" width="4" height="4" fill="#98A8C0" />
<rect x="24" y="324" width="4" height="4" fill="#6F5B4E" />
<rect x="28" y="324" width="4" height="4" fill="#FFF0D8" />
<rect x="32" y="324" width="4" height="4" fill="#D8B0C0" />
<rect x="36" y="324" width="4" height="4" fill="#6890D8" />
<rect x="40" y="324" width="4" height="4" fill="#EEF8FF" />
<rect x="44" y="324" width="4" height="4" fill="#917C62" />
<rect x="48" y="324" width="4" height="4" fill="#C8B8A8" />
<rect x="52" y="324" width="4" height="4" fill="#D8B8B8" />
<rect x="56" y="324" width="4" height="4" fill="#C8B8A8" />
<rect x="60" y="324" width="4" height="4" fill="#6F9096" />
<rect x="24" y="328" width="4" height="4" fill="#766889" />
<rect x="28" y="328" width="4" height="4" fill="#6890D8" />
<rect x="32" y="328" width="4" height="4" fill="#98A8C0" />
<rect x="36" y="328" width="4" height="4" fill="#E6F6F6" />
<rect x="40" y="328" width="4" height="4" fill="#917C62" />
<rect x="44" y="328" width="4" height="4" fill="#839090" />
<rect x="48" y="328" width="4" height="4" fill="#839090" />
<rect x="52" y="328" width="4" height="4" fill="#7C6F7C" />
<rect x="56" y="328" width="4" height="4" fill="#A8A0B8" />
<rect x="60" y="328" width="4" height="4" fill="#839090" />
<rect x="24" y="332" width="4" height="4" fill="#E4F0FA" />
<rect x="28" y="332" width="4" height="4" fill="#EEF8FF" />
<rect x="32" y="332" width="4" height="4" fill="#E4F0FA" />
<rect x="36" y="332" width="4" height="4" fill="#D8B898" />
<rect x="40" y="332" width="4" height="4" fill="#917C62" />
<rect x="44" y="332" width="4" height="4" fill="#4E5BAA" />
<rect x="48" y="332" width="4" height="4" fill="#A8C0E0" />
<rect x="52" y="332" width="4" height="4" fill="#D8B8B8" />
<rect x="56" y="332" width="4" height="4" fill="#7C6F7C" />
<rect x="60" y="332" width="4" height="4" fill="#7C6F7C" />
<rect x="40" y="336" width="4" height="4" fill="#EEF8FF" />
<rect x="128" y="324" width="4" height="4" fill="#6890D8" />
<rect x="132" y="324" width="4" height="4" fill="#D8B0C0" />
<rect x="136" y="324" width="4" height="4" fill="#EEF8FF" />
<rect x="140" y="324" width="4" height="4" fill="#FFF4E2" />
<rect x="144" y="324" width="4" height="4" fill="#FFF4E2" />
<rect x="148" y="324" width="4" height="4" fill="#C8A878" />
<rect x="156" y="324" width="4" height="4" fill="#98A8C0" />
<rect x="164" y="324" width="4" height="4" fill="#EEF8FF" />
<rect x="168" y="324" width="4" height="4" fill="#E6F6F6" />
<rect x="172" y="324" width="4" height="4" fill="#F6FAEA" />
<rect x="128" y="328" width="4" height="4" fill="#626883" />
<rect x="132" y="328" width="4" height="4" fill="#836FB1" />
<rect x="136" y="328" width="4" height="4" fill="#E4F0FA" />
<rect x="140" y="328" width="4" height="4" fill="#EEF8FF" />
<rect x="144" y="328" width="4" height="4" fill="#F6FAEA" />
<rect x="148" y="328" width="4" height="4" fill="#7C6F7C" />
<rect x="152" y="328" width="4" height="4" fill="#A880B0" />
<rect x="156" y="328" width="4" height="4" fill="#F6FAEA" />
<rect x="160" y="328" width="4" height="4" fill="#98A8C0" />
<rect x="164" y="328" width="4" height="4" fill="#E6F6F6" />
<rect x="168" y="328" width="4" height="4" fill="#B0B8A8" />
<rect x="172" y="328" width="4" height="4" fill="#F2ECF4" />
<rect x="128" y="332" width="4" height="4" fill="#A3766F" />
<rect x="132" y="332" width="4" height="4" fill="#A8C0E0" />
<rect x="136" y="332" width="4" height="4" fill="#A8A0B8" />
<rect x="140" y="332" width="4" height="4" fill="#907C6F" />
<rect x="144" y="332" width="4" height="4" fill="#F2ECF4" />
<rect x="148" y="332" width="4" height="4" fill="#C8A878" />
<rect x="152" y="332" width="4" height="4" fill="#C8A878" />
<rect x="156" y="332" width="4" height="4" fill="#F6FAEA" />
<rect x="160" y="332" width="4" height="4" fill="#EEF8FF" />
<rect x="164" y="332" width="4" height="4" fill="#D8B898" />
<rect x="168" y="332" width="4" height="4" fill="#B8C8C0" />
<rect x="172" y="332" width="4" height="4" fill="#F2ECF4" />
<rect x="132" y="336" width="4" height="4" fill="#FFF0D8" />
<rect x="144" y="336" width="4" height="4" fill="#D8B898" />
<rect x="24" y="344" width="4" height="4" fill="#D8B0C0" />
<rect x="28" y="344" width="4" height="4" fill="#D8B898" />
<rect x="36" y="344" width="4" height="4" fill="#D8B0C0" />
<rect x="40" y="344" width="4" height="4" fill="#F6FAEA" />
<rect x="56" y="344" width="4" height="4" fill="#E6F6F6" />
<rect x="76" y="344" width="4" height="4" fill="#EEF8FF" />
<rect x="24" y="348" width="4" height="4" fill="#B8A8C8" />
<rect x="28" y="348" width="4" height="4" fill="#D8B8B8" />
<rect x="32" y="348" width="4" height="4" fill="#7C6F7C" />
<rect x="36" y="348" width="4" height="4" fill="#F0F4E0" />
<rect x="40" y="348" width="4" height="4" fill="#EEF8FF" />
<rect x="44" y="348" width="4" height="4" fill="#A8C0E0" />
<rect x="48" y="348" width="4" height="4" fill="#B8C8C0" />
<rect x="52" y="348" width="4" height="4" fill="#7C6F7C" />
<rect x="56" y="348" width="4" height="4" fill="#A8C0E0" />
<rect x="60" y="348" width="4" height="4" fill="#F0F4E0" />
<rect x="64" y="348" width="4" height="4" fill="#B0B8A8" />
<rect x="68" y="348" width="4" height="4" fill="#D8B0C0" />
<rect x="72" y="348" width="4" height="4" fill="#98A8C0" />
<rect x="76" y="348" width="4" height="4" fill="#4E5BAA" />
<rect x="80" y="348" width="4" height="4" fill="#B0B8A8" />
<rect x="84" y="348" width="4" height="4" fill="#C8B8A8" />
<rect x="24" y="352" width="4" height="4" fill="#6876A3" />
<rect x="28" y="352" width="4" height="4" fill="#FFF4E2" />
<rect x="32" y="352" width="4" height="4" fill="#917C62" />
<rect x="36" y="352" width="4" height="4" fill="#B8A8C8" />
<rect x="40" y="352" width="4" height="4" fill="#D8B898" />
<rect x="44" y="352" width="4" height="4" fill="#D8B898" />
<rect x="48" y="352" width="4" height="4" fill="#C8B8A8" />
<rect x="52" y="352" width="4" height="4" fill="#6F5B4E" />
<rect x="56" y="352" width="4" height="4" fill="#6F9096" />
<rect x="60" y="352" width="4" height="4" fill="#FFF4E2" />
<rect x="64" y="352" width="4" height="4" fill="#626883" />
<rect x="68" y="352" width="4" height="4" fill="#B0B8A8" />
<rect x="72" y="352" width="4" height="4" fill="#D8B898" />
<rect x="76" y="352" width="4" height="4" fill="#F6FAEA" />
<rect x="80" y="352" width="4" height="4" fill="#D8B8B8" />
<rect x="84" y="352" width="4" height="4" fill="#C8A878" />
<rect x="168" y="344" width="4" height="4" fill="#FFF0D8" />
<rect x="172" y="344" width="4" height="4" fill="#D8B8B8" />
<rect x="184" y="344" width="4" height="4" fill="#D8B8B8" />
<rect x="128" y="348" width="4" height="4" fill="#C8A878" />
<rect x="132" y="348" width="4" height="4" fill="#D8B8B8" />
<rect x="136" y="348" width="4" height="4" fill="#98A8C0" />
<rect x="140" y="348" width="4" height="4" fill="#6F5B4E" />
<rect x="144" y="348" width="4" height="4" fill="#AA9090" />
<rect x="148" y="348" width="4" height="4" fill="#836FB1" />
<rect x="152" y="348" width="4" height="4" fill="#6F9096" />
<rect x="156" y="348" width="4" height="4" fill="#E4F0FA" />
<rect x="160" y="348" width="4" height="4" fill="#A8A0B8" />
<rect x="164" y="348" width="4" height="4" fill="#4E5BAA" />
<rect x="168" y="348" width="4" height="4" fill="#6890D8" />
<rect x="172" y="348" width="4" height="4" fill="#766889" />
<rect x="176" y="348" width="4" height="4" fill="#C8B8A8" />
<rect x="180" y="348" width="4" height="4" fill="#C8A878" />
<rect x="184" y="348" width="4" height="4" fill="#B8C8C0" />
<rect x="128" y="352" width="4" height="4" fill="#A8C0E0" />
<rect x="132" y="352" width="4" height="4" fill="#A880B0" />
<rect x="136" y="352" width="4" height="4" fill="#98A8C0" />
<rect x="140" y="352" width="4" height="4" fill="#B8A8C8" />
<rect x="144" y="352" width="4" height="4" fill="#6F9096" />
<rect x="148" y="352" width="4" height="4" fill="#6876A3" />
<rect x="152" y="352" width="4" height="4" fill="#C8A878" />
<rect x="156" y="352" width="4" height="4" fill="#D8B8B8" />
<rect x="160" y="352" width="4" height="4" fill="#C8A878" />
<rect x="164" y="352" width="4" height="4" fill="#FFF0D8" />
<rect x="168" y="352" width="4" height="4" fill="#98A8C0" />
<rect x="172" y="352" width="4" height="4" fill="#B0B8A8" />
<rect x="176" y="352" width="4" height="4" fill="#F2ECF4" />
<rect x="180" y="352" width="4" height="4" fill="#907C6F" />
<rect x="184" y="352" width="4" height="4" fill="#626883" />
<rect x="144" y="356" width="4" height="4" fill="#A8A0B8" />
<rect x="44" y="364" width="4" height="4" fill="#C8B8A8" />
<rect x="52" y="364" width="4" height="4" fill="#D8B8B8" />
<rect x="92" y="364" width="4" height="4" fill="#E6F6F6" />
<rect x="24" y="368" width="4" height="4" fill="#B0B8A8" />
<rect x="28" y="368" width="4" height="4" fill="#A3766F" />
<rect x="32" y="368" width="4" height="4" fill="#E6F6F6" />
<rect x="36" y="368" width="4" height="4" fill="#6F5B4E" />
<rect x="40" y="368" width="4" height="4" fill="#A8C0E0" />
<rect x="44" y="368" width="4" height="4" fill="#C8A878" />
<rect x="48" y="368" width="4" height="4" fill="#4E5BAA" />
<rect x="52" y="368" width="4" height="4" fill="#7C6F7C" />
<rect x="56" y="368" width="4" height="4" fill="#C0C8D8" />
<rect x="60" y="368" width="4" height="4" fill="#FFF4E2" />
<rect x="64" y="368" width="4" height="4" fill="#6F5B4E" />
<rect x="68" y="368" width="4" height="4" fill="#AA9090" />
<rect x="72" y="368" width="4" height="4" fill="#4E5BAA" />
<rect x="76" y="368" width="4" height="4" fill="#626883" />
<rect x="80" y="368" width="4" height="4" fill="#C0C8D8" />
<rect x="84" y="368" width="4" height="4" fill="#6876A3" />
<rect x="88" y="368" width="4" height="4" fill="#6F9096" />
<rect x="92" y="368" width="4" height="4" fill="#907C6F" />
<rect x="24" y="372" width="4" height="4" fill="#839090" />
<rect x="28" y="372" width="4" height="4" fill="#C8B8A8" />
<rect x="32" y="372" width="4" height="4" fill="#6890D8" />
<rect x="36" y="372" width="4" height="4" fill="#766889" />
<rect x="40" y="372" width="4" height="4" fill="#6F9096" />
<rect x="44" y="372" width="4" height="4" fill="#B0B8A8" />
<rect x="48" y="372" width="4" height="4" fill="#B8C8C0" />
<rect x="52" y="372" width="4" height="4" fill="#F0F4E0" />
<rect x="56" y="372" width="4" height="4" fill="#A880B0" />
<rect x="60" y="372" width="4" height="4" fill="#D8B0C0" />
<rect x="64" y="372" width="4" height="4" fill="#4E5BAA" />
<rect x="68" y="372" width="4" height="4" fill="#B8A8C8" />
<rect x="72" y="372" width="4" height="4" fill="#C8B8A8" />
<rect x="76" y="372" width="4" height="4" fill="#E6F6F6" />
<rect x="80" y="372" width="4" height="4" fill="#C0C8D8" />
<rect x="84" y="372" width="4" height="4" fill="#B0B8A8" />
<rect x="88" y="372" width="4" height="4" fill="#AA9090" />
<rect x="92" y="372" width="4" height="4" fill="#98A8C0" />
<rect x="36" y="376" width="4" height="4" fill="#C8B8A8" />
<rect x="40" y="376" width="4" height="4" fill="#D8B0C0" />
<rect x="128" y="368" width="4" height="4" fill="#B0B8A8" />
<rect x="132" y="368" width="4" height="4" fill="#A8C0E0" />
<rect x="136" y="368" width="4" height="4" fill="#7C6F7C" />
<rect x="140" y="368" width="4" height="4" fill="#6890D8" />
<rect x="128" y="372" width="4" height="4" fill="#A8C0E0" />
<rect x="132" y="372" width="4" height="4" fill="#D8B0C0" />
<rect x="136" y="372" width="4" height="4" fill="#98A8C0" />
<rect x="140" y="372" width="4" height="4" fill="#EEF8FF" />
<rect x="28" y="384" width="4" height="4" fill="#EEF8FF" />
<rect x="32" y="384" width="4" height="4" fill="#F0F4E0" />
<rect x="76" y="384" width="4" height="4" fill="#F0F4E0" />
<rect x="84" y="384" width="4" height="4" fill="#FFF4E2" />
<rect x="96" y="384" width="4" height="4" fill="#EEF8FF" />
<rect x="24" y="388" width="4" height="4" fill="#F2ECF4" />
<rect x="28" y="388" width="4" height="4" fill="#EEF8FF" />
<rect x="32" y="388" width="4" height="4" fill="#FFF0D8" />
<rect x="36" y="388" width="4" height="4" fill="#C0C8D8" />
<rect x="40" y="388" width="4" height="4" fill="#A3766F" />
<rect x="44" y="388" width="4" height="4" fill="#EEF8FF" />
<rect x="48" y="388" width="4" height="4" fill="#A8A0B8" />
<rect x="52" y="388" width="4" height="4" fill="#C0C8D8" />
<rect x="56" y="388" width="4" height="4" fill="#D8B8B8" />
<rect x="60" y="388" width="4" height="4" fill="#EEF8FF" />
<rect x="64" y="388" width="4" height="4" fill="#C0C8D8" />
<rect x="68" y="388" width="4" height="4" fill="#98A8C0" />
<rect x="72" y="388" width="4" height="4" fill="#766889" />
<rect x="76" y="388" width="4" height="4" fill="#B8A8C8" />
<rect x="80" y="388" width="4" height="4" fill="#F0F4E0" />
<rect x="84" y="388" width="4" height="4" fill="#FFF4E2" />
<rect x="88" y="388" width="4" height="4" fill="#D8B8B8" />
<rect x="96" y="388" width="4" height="4" fill="#6890D8" />
<rect x="100" y="388" width="4" height="4" fill="#6F9096" />
<rect x="104" y="388" width="4" height="4" fill="#F6FAEA" />
<rect x="108" y="388" width="4" height="4" fill="#EEF8FF" />
<rect x="112" y="388" width="4" height="4" fill="#E4F0FA" />
<rect x="24" y="392" width="4" height="4" fill="#C8B8A8" />
<rect x="28" y="392" width="4" height="4" fill="#EEF8FF" />
<rect x="32" y="392" width="4" height="4" fill="#C8B8A8" />
<rect x="36" y="392" width="4" height="4" fill="#B8C8C0" />
<rect x="40" y="392" width="4" height="4" fill="#F6FAEA" />
<rect x="44" y="392" width="4" height="4" fill="#B8A8C8" />
<rect x="48" y="392" width="4" height="4" fill="#A880B0" />
<rect x="52" y="392" width="4" height="4" fill="#B0B8A8" />
<rect x="56" y="392" width="4" height="4" fill="#A3766F" />
<rect x="60" y="392" width="4" height="4" fill="#C8A878" />
<rect x="64" y="392" width="4" height="4" fill="#F6FAEA" />
<rect x="68" y="392" width="4" height="4" fill="#B0B8A8" />
<rect x="72" y="392" width="4" height="4" fill="#D8B0C0" />
<rect x="76" y="392" width="4" height="4" fill="#766889" />
<rect x="80" y="392" width="4" height="4" fill="#A8C0E0" />
<rect x="84" y="392" width="4" height="4" fill="#C0C8D8" />
<rect x="88" y="392" width="4" height="4" fill="#A880B0" />
<rect x="92" y="392" width="4" height="4" fill="#D8B0C0" />
<rect x="96" y="392" width="4" height="4" fill="#6F9096" />
<rect x="100" y="392" width="4" height="4" fill="#98A8C0" />
<rect x="104" y="392" width="4" height="4" fill="#FFF0D8" />
<rect x="108" y="392" width="4" height="4" fill="#A8A0B8" />
<rect x="112" y="392" width="4" height="4" fill="#B0B8A8" />
<rect x="24" y="396" width="4" height="4" fill="#C0C8D8" />
<rect x="28" y="396" width="4" height="4" fill="#F2ECF4" />
<rect x="32" y="396" width="4" height="4" fill="#E6F6F6" />
<rect x="36" y="396" width="4" height="4" fill="#C8B8A8" />
<rect x="40" y="396" width="4" height="4" fill="#6F5B4E" />
<rect x="44" y="396" width="4" height="4" fill="#B0B8A8" />
<rect x="48" y="396" width="4" height="4" fill="#D8B898" />
<rect x="52" y="396" width="4" height="4" fill="#FFF0D8" />
<rect x="56" y="396" width="4" height="4" fill="#D8B898" />
<rect x="60" y="396" width="4" height="4" fill="#B0B8A8" />
<rect x="64" y="396" width="4" height="4" fill="#A8C0E0" />
<rect x="68" y="396" width="4" height="4" fill="#FFF0D8" />
<rect x="72" y="396" width="4" height="4" fill="#EEF8FF" />
<rect x="76" y="396" width="4" height="4" fill="#FFF4E2" />
<rect x="80" y="396" width="4" height="4" fill="#B8C8C0" />
<rect x="84" y="396" width="4" height="4" fill="#6F5B4E" />
<rect x="88" y="396" width="4" height="4" fill="#F0F4E0" />
<rect x="92" y="396" width="4" height="4" fill="#F6FAEA" />
<rect x="96" y="396" width="4" height="4" fill="#A880B0" />
<rect x="100" y="396" width="4" height="4" fill="#D8B898" />
<rect x="104" y="396" width="4" height="4" fill="#C8B8A8" />
<rect x="108" y="396" width="4" height="4" fill="#4E5BAA" />
<rect x="112" y="396" width="4" height="4" fill="#EEF8FF" />
<rect x="136" y="384" width="4" height="4" fill="#F2ECF4" />
<rect x="144" y="384" width="4" height="4" fill="#FFF0D8" />
<rect x="152" y="384" width="4" height="4" fill="#E6F6F6" />
<rect x="160" y="384" width="4" height="4" fill="#C0C8D8" />
<rect x="168" y="384" width="4" height="4" fill="#B8C8C0" />
<rect x="128" y="388" width="4" height="4" fill="#D8B898" />
<rect x="132" y="388" width="4" height="4" fill="#F6FAEA" />
<rect x="136" y="388" width="4" height="4" fill="#F2ECF4" />
<rect x="140" y="388" width="4" height="4" fill="#E6F6F6" />
<rect x="144" y="388" width="4" height="4" fill="#FFF4E2" />
<rect x="148" y="388" width="4" height="4" fill="#F0F4E0" />
<rect x="152" y="388" width="4" height="4" fill="#F6FAEA" />
<rect x="156" y="388" width="4" height="4" fill="#F0F4E0" />
<rect x="160" y="388" width="4" height="4" fill="#D8B0C0" />
<rect x="164" y="388" width="4" height="4" fill="#EEF8FF" />
<rect x="168" y="388" width="4" height="4" fill="#EEF8FF" />
<rect x="172" y="388" width="4" height="4" fill="#E4F0FA" />
<rect x="176" y="388" width="4" height="4" fill="#6876A3" />
<rect x="128" y="392" width="4" height="4" fill="#C0C8D8" />
<rect x="132" y="392" width="4" height="4" fill="#A8A0B8" />
<rect x="136" y="392" width="4" height="4" fill="#6890D8" />
<rect x="140" y="392" width="4" height="4" fill="#626883" />
<rect x="144" y="392" width="4" height="4" fill="#C0C8D8" />
<rect x="148" y="392" width="4" height="4" fill="#839090" />
<rect x="152" y="392" width="4" height="4" fill="#AA9090" />
<rect x="156" y="392" width="4" height="4" fill="#D8B0C0" />
<rect x="160" y="392" width="4" height="4" fill="#C8A878" />
<rect x="164" y="392" width="4" height="4" fill="#E6F6F6" />
<rect x="168" y="392" width="4" height="4" fill="#766889" />
<rect x="172" y="392" width="4" height="4" fill="#B8C8C0" />
<rect x="176" y="392" width="4" height="4" fill="#6F9096" />
<rect x="128" y="396" width="4" height="4" fill="#98A8C0" />
<rect x="132" y="396" width="4" height="4" fill="#F6FAEA" />
<rect x="136" y="396" width="4" height="4" fill="#6890D8" />
<rect x="140" y="396" width="4" height="4" fill="#E4F0FA" />
<rect x="144" y="396" width="4" height="4" fill="#98A8C0" />
<rect x="148" y="396" width="4" height="4" fill="#D8B0C0" />
<rect x="152" y="396" width="4" height="4" fill="#FFF4E2" />
<rect x="156" y="396" width="4" height="4" fill="#E4F0FA" />
<rect x="160" y="396" width="4" height="4" fill="#4E5BAA" />
<rect x="164" y="396" width="4" height="4" fill="#F2ECF4" />
<rect x="168" y="396" width="4" height="4" fill="#A3766F" />
<rect x="172" y="396" width="4" height="4" fill="#A3766F" />
<rect x="176" y="396" width="4" height="4" fill="#C8A878" />
<rect x="24" y="408" width="4" height="4" fill="#F0F4E0" />
<rect x="32" y="408" width="4" height="4" fill="#EEF8FF" />
<rect x="36" y="408" width="4" height="4" fill="#7C6F7C" />
<rect x="40" y="408" width="4" height="4" fill="#C0C8D8" />
<rect x="44" y="408" width="4" height="4" fill="#A8A0B8" />
<rect x="48" y="408" width="4" height="4" fill="#A880B0" />
<rect x="52" y="408" width="4" height="4" fill="#F2ECF4" />
<rect x="56" y="408" width="4" height="4" fill="#E6F6F6" />
<rect x="60" y="408" width="4" height="4" fill="#D8B0C0" />
<rect x="64" y="408" width="4" height="4" fill="#FFF4E2" />
<rect x="68" y="408" width="4" height="4" fill="#A3766F" />
<rect x="72" y="408" width="4" height="4" fill="#E4F0FA" />
<rect x="76" y="408" width="4" height="4" fill="#D8B0C0" />
<rect x="80" y="408" width="4" height="4" fill="#4E5BAA" />
<rect x="24" y="412" width="4" height="4" fill="#E6F6F6" />
<rect x="28" y="412" width="4" height="4" fill="#6F5B4E" />
<rect x="32" y="412" width="4" height="4" fill="#6F9096" />
<rect x="36" y="412" width="4" height="4" fill="#836FB1" />
<rect x="40" y="412" width="4" height="4" fill="#7C6F7C" />
<rect x="44" y="412" width="4" height="4" fill="#E6F6F6" />
<rect x="48" y="412" width="4" height="4" fill="#D8B898" />
<rect x="52" y="412" width="4" height="4" fill="#98A8C0" />
<rect x="56" y="412" width="4" height="4" fill="#A8C0E0" />
<rect x="60" y="412" width="4" height="4" fill="#C8A878" />
<rect x="64" y="412" width="4" height="4" fill="#A880B0" />
<rect x="68" y="412" width="4" height="4" fill="#D8B0C0" />
<rect x="72" y="412" width="4" height="4" fill="#D8B0C0" />
<rect x="76" y="412" width="4" height="4" fill="#D8B8B8" />
<rect x="80" y="412" width="4" height="4" fill="#C8A878" />
<rect x="24" y="416" width="4" height="4" fill="#F2ECF4" />
<rect x="28" y="416" width="4" height="4" fill="#FFF4E2" />
<rect x="32" y="416" width="4" height="4" fill="#F6FAEA" />
<rect x="36" y="416" width="4" height="4" fill="#F0F4E0" />
<rect x="40" y="416" width="4" height="4" fill="#EEF8FF" />
<rect x="44" y="416" width="4" height="4" fill="#A8A0B8" />
<rect x="48" y="416" width="4" height="4" fill="#D8B898" />
<rect x="52" y="416" width="4" height="4" fill="#B8C8C0" />
<rect x="56" y="416" width="4" height="4" fill="#F2ECF4" />
<rect x="60" y="416" width="4" height="4" fill="#A8C0E0" />
<rect x="64" y="416" width="4" height="4" fill="#F2ECF4" />
<rect x="68" y="416" width="4" height="4" fill="#4E5BAA" />
<rect x="72" y="416" width="4" height="4" fill="#F2ECF4" />
<rect x="76" y="416" width="4" height="4" fill="#FFF4E2" />
<rect x="36" y="420" width="4" height="4" fill="#B8A8C8" />
<rect x="48" y="420" width="4" height="4" fill="#B8A8C8" />
<rect x="60" y="420" width="4" height="4" fill="#A8C0E0" />
<rect x="128" y="408" width="4" height="4" fill="#D8B898" />
<rect x="132" y="408" width="4" height="4" fill="#B8C8C0" />
<rect x="136" y="408" width="4" height="4" fill="#F0F4E0" />
<rect x="140" y="408" width="4" height="4" fill="#D8B0C0" />
<rect x="144" y="408" width="4" height="4" fill="#E4F0FA" />
<rect x="148" y="408" width="4" height="4" fill="#D8B898" />
<rect x="156" y="408" width="4" height="4" fill="#B8A8C8" />
<rect x="160" y="408" width="4" height="4" fill="#EEF8FF" />
<rect x="164" y="408" width="4" height="4" fill="#A8C0E0" />
<rect x="168" y="408" width="4" height="4" fill="#F0F4E0" />
<rect x="172" y="408" width="4" height="4" fill="#FFF0D8" />
<rect x="176" y="408" width="4" height="4" fill="#766889" />
<rect x="180" y="408" width="4" height="4" fill="#F2ECF4" />
<rect x="184" y="408" width="4" height="4" fill="#E6F6F6" />
<rect x="192" y="408" width="4" height="4" fill="#C0C8D8" />
<rect x="196" y="408" width="4" height="4" fill="#C8A878" />
<rect x="200" y="408" width="4" height="4" fill="#F0F4E0" />
<rect x="204" y="408" width="4" height="4" fill="#6F9096" />
<rect x="208" y="408" width="4" height="4" fill="#E4F0FA" />
<rect x="212" y="408" width="4" height="4" fill="#B8C8C0" />
<rect x="128" y="412" width="4" height="4" fill="#626883" />
<rect x="132" y="412" width="4" height="4" fill="#836FB1" />
<rect x="136" y="412" width="4" height="4" fill="#C8A878" />
<rect x="140" y="412" width="4" height="4" fill="#6890D8" />
<rect x="144" y="412" width="4" height="4" fill="#766889" />
<rect x="148" y="412" width="4" height="4" fill="#C8A878" />
<rect x="152" y="412" width="4" height="4" fill="#B8A8C8" />
<rect x="156" y="412" width="4" height="4" fill="#E4F0FA" />
<rect x="160" y="412" width="4" height="4" fill="#4E5BAA" />
<rect x="164" y="412" width="4" height="4" fill="#D8B0C0" />
<rect x="168" y="412" width="4" height="4" fill="#F2ECF4" />
<rect x="172" y="412" width="4" height="4" fill="#C8A878" />
<rect x="176" y="412" width="4" height="4" fill="#E4F0FA" />
<rect x="180" y="412" width="4" height="4" fill="#B8C8C0" />
<rect x="184" y="412" width="4" height="4" fill="#C0C8D8" />
<rect x="188" y="412" width="4" height="4" fill="#D8B898" />
<rect x="192" y="412" width="4" height="4" fill="#6F9096" />
<rect x="196" y="412" width="4" height="4" fill="#6890D8" />
<rect x="200" y="412" width="4" height="4" fill="#A3766F" />
<rect x="204" y="412" width="4" height="4" fill="#A880B0" />
<rect x="208" y="412" width="4" height="4" fill="#B8A8C8" />
<rect x="212" y="412" width="4" height="4" fill="#6F9096" />
<rect x="128" y="416" width="4" height="4" fill="#FFF0D8" />
<rect x="132" y="416" width="4" height="4" fill="#B8A8C8" />
<rect x="136" y="416" width="4" height="4" fill="#B8C8C0" />
<rect x="140" y="416" width="4" height="4" fill="#F0F4E0" />
<rect x="144" y="416" width="4" height="4" fill="#D8B0C0" />
<rect x="148" y="416" width="4" height="4" fill="#A3766F" />
<rect x="152" y="416" width="4" height="4" fill="#836FB1" />
<rect x="156" y="416" width="4" height="4" fill="#C0C8D8" />
<rect x="160" y="416" width="4" height="4" fill="#B8A8C8" />
<rect x="168" y="416" width="4" height="4" fill="#A3766F" />
<rect x="172" y="416" width="4" height="4" fill="#A8C0E0" />
<rect x="176" y="416" width="4" height="4" fill="#E6F6F6" />
<rect x="180" y="416" width="4" height="4" fill="#B8C8C0" />
<rect x="184" y="416" width="4" height="4" fill="#626883" />
<rect x="188" y="416" width="4" height="4" fill="#AA9090" />
<rect x="192" y="416" width="4" height="4" fill="#B8C8C0" />
<rect x="196" y="416" width="4" height="4" fill="#A8C0E0" />
<rect x="200" y="416" width="4" height="4" fill="#98A8C0" />
<rect x="204" y="416" width="4" height="4" fill="#4E5BAA" />
<rect x="208" y="416" width="4" height="4" fill="#98A8C0" />
<rect x="212" y="416" width="4" height="4" fill="#A8C0E0" />
<rect x="168" y="420" width="4" height="4" fill="#F6FAEA" />
<rect x="172" y="420" width="4" height="4" fill="#A8A0B8" />
<rect x="196" y="420" width="4" height="4" fill="#E4F0FA" />
<rect x="24" y="432" width="4" height="4" fill="#D8B8B8" />
<rect x="28" y="432" width="4" height="4" fill="#836FB1" />
<rect x="32" y="432" width="4" height="4" fill="#E6F6F6" />
<rect x="36" y="432" width="4" height="4" fill="#E4F0FA" />
<rect x="40" y="432" width="4" height="4" fill="#A8C0E0" />
<rect x="44" y="432" width="4" height="4" fill="#B0B8A8" />
<rect x="48" y="432" width="4" height="4" fill="#D8B898" />
<rect x="52" y="432" width="4" height="4" fill="#EEF8FF" />
<rect x="56" y="432" width="4" height="4" fill="#F6FAEA" />
<rect x="60" y="432" width="4" height="4" fill="#A8C0E0" />
<rect x="64" y="432" width="4" height="4" fill="#C8A878" />
<rect x="68" y="432" width="4" height="4" fill="#B8C8C0" />
<rect x="72" y="432" width="4" height="4" fill="#C8B8A8" />
<rect x="76" y="432" width="4" height="4" fill="#B8A8C8" />
<rect x="80" y="432" width="4" height="4" fill="#FFF4E2" />
<rect x="84" y="432" width="4" height="4" fill="#98A8C0" />
<rect x="24" y="436" width="4" height="4" fill="#98A8C0" />
<rect x="28" y="436" width="4" height="4" fill="#F2ECF4" />
<rect x="32" y="436" width="4" height="4" fill="#B8A8C8" />
<rect x="36" y="436" width="4" height="4" fill="#F0F4E0" />
<rect x="40" y="436" width="4" height="4" fill="#FFF4E2" />
<rect x="44" y="436" width="4" height="4" fill="#6890D8" />
<rect x="48" y="436" width="4" height="4" fill="#F6FAEA" />
<rect x="52" y="436" width="4" height="4" fill="#C0C8D8" />
<rect x="56" y="436" width="4" height="4" fill="#F2ECF4" />
<rect x="60" y="436" width="4" height="4" fill="#C0C8D8" />
<rect x="64" y="436" width="4" height="4" fill="#F0F4E0" />
<rect x="68" y="436" width="4" height="4" fill="#B0B8A8" />
<rect x="72" y="436" width="4" height="4" fill="#B0B8A8" />
<rect x="76" y="436" width="4" height="4" fill="#B8A8C8" />
<rect x="80" y="436" width="4" height="4" fill="#D8B8B8" />
<rect x="84" y="436" width="4" height="4" fill="#C8A878" />
<rect x="128" y="432" width="4" height="4" fill="#D8B898" />
<rect x="132" y="432" width="4" height="4" fill="#A880B0" />
<rect x="136" y="432" width="4" height="4" fill="#A8A0B8" />
<rect x="140" y="432" width="4" height="4" fill="#C0C8D8" />
<rect x="144" y="432" width="4" height="4" fill="#B8A8C8" />
<rect x="148" y="432" width="4" height="4" fill="#6890D8" />
<rect x="152" y="432" width="4" height="4" fill="#E6F6F6" />
<rect x="156" y="432" width="4" height="4" fill="#6890D8" />
<rect x="160" y="432" width="4" height="4" fill="#B8A8C8" />
<rect x="164" y="432" width="4" height="4" fill="#F2ECF4" />
<rect x="168" y="432" width="4" height="4" fill="#B8C8C0" />
<rect x="172" y="432" width="4" height="4" fill="#B8A8C8" />
<rect x="128" y="436" width="4" height="4" fill="#D8B8B8" />
<rect x="132" y="436" width="4" height="4" fill="#B8A8C8" />
<rect x="136" y="436" width="4" height="4" fill="#E4F0FA" />
<rect x="140" y="436" width="4" height="4" fill="#D8B898" />
<rect x="144" y="436" width="4" height="4" fill="#C8A878" />
<rect x="148" y="436" width="4" height="4" fill="#C0C8D8" />
<rect x="152" y="436" width="4" height="4" fill="#EEF8FF" />
<rect x="156" y="436" width="4" height="4" fill="#C8A878" />
<rect x="160" y="436" width="4" height="4" fill="#B0B8A8" />
<rect x="164" y="436" width="4" height="4" fill="#B8A8C8" />
<rect x="168" y="436" width="4" height="4" fill="#F2ECF4" />
<rect x="172" y="436" width="4" height="4" fill="#6890D8" />
<rect x="24" y="448" width="4" height="4" fill="#F6FAEA" />
<rect x="28" y="448" width="4" height="4" fill="#F6FAEA" />
<rect x="32" y="448" width="4" height="4" fill="#F0F4E0" />
<rect x="48" y="448" width="4" height="4" fill="#EEF8FF" />
<rect x="60" y="448" width="4" height="4" fill="#E4F0FA" />
<rect x="68" y="448" width="4" height="4" fill="#F2ECF4" />
<rect x="24" y="452" width="4" height="4" fill="#6876A3" />
<rect x="28" y="452" width="4" height="4" fill="#E4F0FA" />
<rect x="32" y="452" width="4" height="4" fill="#D8B8B8" />
<rect x="36" y="452" width="4" height="4" fill="#E4F0FA" />
<rect x="40" y="452" width="4" height="4" fill="#6876A3" />
<rect x="44" y="452" width="4" height="4" fill="#A3766F" />
<rect x="48" y="452" width="4" height="4" fill="#C0C8D8" />
<rect x="52" y="452" width="4" height="4" fill="#D8B898" />
<rect x="56" y="452" width="4" height="4" fill="#FFF4E2" />
<rect x="60" y="452" width="4" height="4" fill="#B8C8C0" />
<rect x="64" y="452" width="4" height="4" fill="#839090" />
<rect x="68" y="452" width="4" height="4" fill="#B0B8A8" />
<rect x="72" y="452" width="4" height="4" fill="#766889" />
<rect x="24" y="456" width="4" height="4" fill="#6F9096" />
<rect x="28" y="456" width="4" height="4" fill="#D8B8B8" />
<rect x="32" y="456" width="4" height="4" fill="#6876A3" />
<rect x="36" y="456" width="4" height="4" fill="#B0B8A8" />
<rect x="40" y="456" width="4" height="4" fill="#C8B8A8" />
<rect x="44" y="456" width="4" height="4" fill="#A8A0B8" />
<rect x="48" y="456" width="4" height="4" fill="#6F9096" />
<rect x="52" y="456" width="4" height="4" fill="#A8C0E0" />
<rect x="56" y="456" width="4" height="4" fill="#C8A878" />
<rect x="60" y="456" width="4" height="4" fill="#839090" />
<rect x="64" y="456" width="4" height="4" fill="#A8C0E0" />
<rect x="68" y="456" width="4" height="4" fill="#B8A8C8" />
<rect x="72" y="456" width="4" height="4" fill="#AA9090" />
<rect x="28" y="460" width="4" height="4" fill="#E4F0FA" />
<rect x="64" y="460" width="4" height="4" fill="#F2ECF4" />
<rect x="128" y="448" width="4" height="4" fill="#FFF4E2" />
<rect x="144" y="448" width="4" height="4" fill="#A8C0E0" />
<rect x="128" y="452" width="4" height="4" fill="#A880B0" />
<rect x="132" y="452" width="4" height="4" fill="#D8B898" />
<rect x="136" y="452" width="4" height="4" fill="#7C6F7C" />
<rect x="140" y="452" width="4" height="4" fill="#C8B8A8" />
<rect x="144" y="452" width="4" height="4" fill="#6876A3" />
<rect x="148" y="452" width="4" height="4" fill="#6876A3" />
<rect x="152" y="452" width="4" height="4" fill="#907C6F" />
<rect x="156" y="452" width="4" height="4" fill="#C0C8D8" />
<rect x="160" y="452" width="4" height="4" fill="#D8B0C0" />
<rect x="128" y="456" width="4" height="4" fill="#6F9096" />
<rect x="132" y="456" width="4" height="4" fill="#6F9096" />
<rect x="136" y="456" width="4" height="4" fill="#B0B8A8" />
<rect x="140" y="456" width="4" height="4" fill="#626883" />
<rect x="144" y="456" width="4" height="4" fill="#98A8C0" />
<rect x="148" y="456" width="4" height="4" fill="#6F5B4E" />
<rect x="152" y="456" width="4" height="4" fill="#D8B8B8" />
<rect x="156" y="456" width="4" height="4" fill="#917C62" />
<rect x="160" y="456" width="4" height="4" fill="#B8C8C0" />
<rect x="140" y="460" width="4" height="4" fill="#D8B898" />
<rect x="24" y="468" width="4" height="4" fill="#B8C8C0" />
<rect x="32" y="468" width="4" height="4" fill="#D8B8B8" />
<rect x="24" y="472" width="4" height="4" fill="#6F5B4E" />
<rect x="32" y="472" width="4" height="4" fill="#98A8C0" />
<rect x="36" y="472" width="4" height="4" fill="#D8B8B8" />
<rect x="44" y="472" width="4" height="4" fill="#A880B0" />
<rect x="48" y="472" width="4" height="4" fill="#FFF0D8" />
<rect x="52" y="472" width="4" height="4" fill="#F6FAEA" />
<rect x="24" y="476" width="4" height="4" fill="#6890D8" />
<rect x="28" y="476" width="4" height="4" fill="#C0C8D8" />
<rect x="32" y="476" width="4" height="4" fill="#917C62" />
<rect x="36" y="476" width="4" height="4" fill="#836FB1" />
<rect x="40" y="476" width="4" height="4" fill="#FFF4E2" />
<rect x="44" y="476" width="4" height="4" fill="#A8A0B8" />
<rect x="48" y="476" width="4" height="4" fill="#D8B8B8" />
<rect x="52" y="476" width="4" height="4" fill="#907C6F" />
<rect x="24" y="480" width="4" height="4" fill="#FFF4E2" />
<rect x="28" y="480" width="4" height="4" fill="#D8B898" />
<rect x="32" y="480" width="4" height="4" fill="#C8B8A8" />
<rect x="36" y="480" width="4" height="4" fill="#D8B8B8" />
<rect x="40" y="480" width="4" height="4" fill="#C0C8D8" />
<rect x="44" y="480" width="4" height="4" fill="#EEF8FF" />
<rect x="48" y="480" width="4" height="4" fill="#F2ECF4" />
<rect x="52" y="480" width="4" height="4" fill="#6876A3" />
<rect x="132" y="468" width="4" height="4" fill="#E4F0FA" />
<rect x="140" y="468" width="4" height="4" fill="#E6F6F6" />
<rect x="144" y="468" width="4" height="4" fill="#E6F6F6" />
<rect x="152" y="468" width="4" height="4" fill="#FFF0D8" />
<rect x="164" y="468" width="4" height="4" fill="#B8A8C8" />
<rect x="168" y="468" width="4" height="4" fill="#FFF0D8" />
<rect x="128" y="472" width="4" height="4" fill="#D8B898" />
<rect x="132" y="472" width="4" height="4" fill="#FFF4E2" />
<rect x="136" y="472" width="4" height="4" fill="#D8B898" />
<rect x="144" y="472" width="4" height="4" fill="#A8A0B8" />
<rect x="148" y="472" width="4" height="4" fill="#D8B0C0" />
<rect x="152" y="472" width="4" height="4" fill="#A8A0B8" />
<rect x="156" y="472" width="4" height="4" fill="#B8A8C8" />
<rect x="160" y="472" width="4" height="4" fill="#EEF8FF" />
<rect x="164" y="472" width="4" height="4" fill="#E6F6F6" />
<rect x="168" y="472" width="4" height="4" fill="#E4F0FA" />
<rect x="172" y="472" width="4" height="4" fill="#D8B0C0" />
<rect x="176" y="472" width="4" height="4" fill="#F0F4E0" />
<rect x="180" y="472" width="4" height="4" fill="#D8B898" />
<rect x="184" y="472" width="4" height="4" fill="#C8A878" />
<rect x="188" y="472" width="4" height="4" fill="#A880B0" />
<rect x="192" y="472" width="4" height="4" fill="#E6F6F6" />
<rect x="196" y="472" width="4" height="4" fill="#D8B0C0" />
<rect x="128" y="476" width="4" height="4" fill="#6F5B4E" />
<rect x="132" y="476" width="4" height="4" fill="#4E5BAA" />
<rect x="136" y="476" width="4" height="4" fill="#B8C8C0" />
<rect x="140" y="476" width="4" height="4" fill="#D8B8B8" />
<rect x="144" y="476" width="4" height="4" fill="#6F5B4E" />
<rect x="148" y="476" width="4" height="4" fill="#6F5B4E" />
<rect x="152" y="476" width="4" height="4" fill="#766889" />
<rect x="156" y="476" width="4" height="4" fill="#836FB1" />
<rect x="160" y="476" width="4" height="4" fill="#6F9096" />
<rect x="164" y="476" width="4" height="4" fill="#A3766F" />
<rect x="168" y="476" width="4" height="4" fill="#D8B898" />
<rect x="172" y="476" width="4" height="4" fill="#F2ECF4" />
<rect x="176" y="476" width="4" height="4" fill="#6890D8" />
<rect x="180" y="476" width="4" height="4" fill="#766889" />
<rect x="184" y="476" width="4" height="4" fill="#6F5B4E" />
<rect x="188" y="476" width="4" height="4" fill="#A880B0" />
<rect x="192" y="476" width="4" height="4" fill="#839090" />
<rect x="196" y="476" width="4" height="4" fill="#6890D8" />
<rect x="132" y="480" width="4" height="4" fill="#A8A0B8" />
<rect x="136" y="480" width="4" height="4" fill="#C8B8A8" />
<rect x="140" y="480" width="4" height="4" fill="#C8B8A8" />
<rect x="144" y="480" width="4" height="4" fill="#6890D8" />
<rect x="148" y="480" width="4" height="4" fill="#D8B8B8" />
<rect x="152" y="480" width="4" height="4" fill="#A8A0B8" />
<rect x="156" y="480" width="4" height="4" fill="#C8A878" />
<rect x="160" y="480" width="4" height="4" fill="#F6FAEA" />
<rect x="164" y="480" width="4" height="4" fill="#98A8C0" />
<rect x="168" y="480" width="4" height="4" fill="#C8B8A8" />
<rect x="172" y="480" width="4" height="4" fill="#B0B8A8" />
<rect x="176" y="480" width="4" height="4" fill="#6890D8" />
<rect x="180" y="480" width="4" height="4" fill="#EEF8FF" />
<rect x="188" y="480" width="4" height="4" fill="#FFF4E2" />
<rect x="192" y="480" width="4" height="4" fill="#FFF4E2" />
<rect x="196" y="480" width="4" height="4" fill="#907C6F" />
<rect x="24" y="492" width="4" height="4" fill="#98A8C0" />
<rect x="28" y="492" width="4" height="4" fill="#F2ECF4" />
<rect x="32" y="492" width="4" height="4" fill="#A8C0E0" />
<rect x="36" y="492" width="4" height="4" fill="#E6F6F6" />
<rect x="40" y="492" width="4" height="4" fill="#E6F6F6" />
<rect x="44" y="492" width="4" height="4" fill="#E6F6F6" />
<rect x="48" y="492" width="4" height="4" fill="#B0B8A8" />
<rect x="52" y="492" width="4" height="4" fill="#EEF8FF" />
<rect x="56" y="492" width="4" height="4" fill="#FFF0D8" />
<rect x="60" y="492" width="4" height="4" fill="#4E5BAA" />
<rect x="64" y="492" width="4" height="4" fill="#A880B0" />
<rect x="68" y="492" width="4" height="4" fill="#B0B8A8" />
<rect x="72" y="492" width="4" height="4" fill="#98A8C0" />
<rect x="24" y="496" width="4" height="4" fill="#E4F0FA" />
<rect x="28" y="496" width="4" height="4" fill="#A880B0" />
<rect x="32" y="496" width="4" height="4" fill="#D8B8B8" />
<rect x="36" y="496" width="4" height="4" fill="#EEF8FF" />
<rect x="40" y="496" width="4" height="4" fill="#766889" />
<rect x="44" y="496" width="4" height="4" fill="#C8B8A8" />
<rect x="48" y="496" width="4" height="4" fill="#C8A878" />
<rect x="52" y="496" width="4" height="4" fill="#626883" />
<rect x="56" y="496" width="4" height="4" fill="#D8B0C0" />
<rect x="60" y="496" width="4" height="4" fill="#98A8C0" />
<rect x="64" y="496" width="4" height="4" fill="#FFF0D8" />
<rect x="68" y="496" width="4" height="4" fill="#6F9096" />
<rect x="72" y="496" width="4" height="4" fill="#98A8C0" />
<rect x="24" y="500" width="4" height="4" fill="#6F5B4E" />
<rect x="28" y="500" width="4" height="4" fill="#6F5B4E" />
<rect x="32" y="500" width="4" height="4" fill="#EEF8FF" />
<rect x="36" y="500" width="4" height="4" fill="#E6F6F6" />
<rect x="40" y="500" width="4" height="4" fill="#A880B0" />
<rect x="44" y="500" width="4" height="4" fill="#E6F6F6" />
<rect x="48" y="500" width="4" height="4" fill="#D8B8B8" />
<rect x="52" y="500" width="4" height="4" fill="#7C6F7C" />
<rect x="56" y="500" width="4" height="4" fill="#D8B8B8" />
<rect x="60" y="500" width="4" height="4" fill="#6876A3" />
<rect x="64" y="500" width="4" height="4" fill="#EEF8FF" />
<rect x="68" y="500" width="4" height="4" fill="#A8C0E0" />
<rect x="72" y="500" width="4" height="4" fill="#B0B8A8" />
<rect x="40" y="512" width="4" height="4" fill="#A880B0" />
<rect x="24" y="516" width="4" height="4" fill="#FFF4E2" />
<rect x="28" y="516" width="4" height="4" fill="#4E5BAA" />
<rect x="32" y="516" width="4" height="4" fill="#6890D8" />
<rect x="36" y="516" width="4" height="4" fill="#B8C8C0" />
<rect x="40" y="516" width="4" height="4" fill="#6890D8" />
<rect x="44" y="516" width="4" height="4" fill="#98A8C0" />
<rect x="24" y="520" width="4" height="4" fill="#A880B0" />
<rect x="28" y="520" width="4" height="4" fill="#A880B0" />
<rect x="32" y="520" width="4" height="4" fill="#C0C8D8" />
<rect x="36" y="520" width="4" height="4" fill="#917C62" />
<rect x="40" y="520" width="4" height="4" fill="#C0C8D8" />
<rect x="44" y="520" width="4" height="4" fill="#B8C8C0" />
<rect x="136" y="512" width="4" height="4" fill="#FFF0D8" />
<rect x="168" y="512" width="4" height="4" fill="#F6FAEA" />
<rect x="128" y="516" width="4" height="4" fill="#B8C8C0" />
<rect x="132" y="516" width="4" height="4" fill="#F6FAEA" />
<rect x="136" y="516" width="4" height="4" fill="#B8C8C0" />
<rect x="140" y="516" width="4" height="4" fill="#A8C0E0" />
<rect x="144" y="516" width="4" height="4" fill="#A8C0E0" />
<rect x="148" y="516" width="4" height="4" fill="#C8B8A8" />
<rect x="152" y="516" width="4" height="4" fill="#B8C8C0" />
<rect x="156" y="516" width="4" height="4" fill="#E4F0FA" />
<rect x="160" y="516" width="4" height="4" fill="#C8B8A8" />
<rect x="164" y="516" width="4" height="4" fill="#A8C0E0" />
<rect x="168" y="516" width="4" height="4" fill="#C8A878" />
<rect x="128" y="520" width="4" height="4" fill="#A8C0E0" />
<rect x="132" y="520" width="4" height="4" fill="#E6F6F6" />
<rect x="136" y="520" width="4" height="4" fill="#6890D8" />
<rect x="140" y="520" width="4" height="4" fill="#E4F0FA" />
<rect x="144" y="520" width="4" height="4" fill="#E4F0FA" />
<rect x="148" y="520" width="4" height="4" fill="#C8A878" />
<rect x="152" y="520" width="4" height="4" fill="#C0C8D8" />
<rect x="156" y="520" width="4" height="4" fill="#A8A0B8" />
<rect x="160" y="520" width="4" height="4" fill="#F6FAEA" />
<rect x="164" y="520" width="4" height="4" fill="#F2ECF4" />
<rect x="168" y="520" width="4" height="4" fill="#F2ECF4" />
<rect x="164" y="524" width="4" height="4" fill="#F2ECF4" />
<rect x="28" y="532" width="4" height="4" fill="#EEF8FF" />
<rect x="32" y="532" width="4" height="4" fill="#FFF0D8" />
<rect x="52" y="532" width="4" height="4" fill="#C0C8D8" />
<rect x="72" y="532" width="4" height="4" fill="#EEF8FF" />
<rect x="76" y="532" width="4" height="4" fill="#E6F6F6" />
<rect x="24" y="536" width="4" height="4" fill="#A8C0E0" />
<rect x="28" y="536" width="4" height="4" fill="#A8C0E0" />
<rect x="32" y="536" width="4" height="4" fill="#D8B898" />
<rect x="36" y="536" width="4" height="4" fill="#C0C8D8" />
<rect x="40" y="536" width="4" height="4" fill="#FFF4E2" />
<rect x="44" y="536" width="4" height="4" fill="#6F5B4E" />
<rect x="48" y="536" width="4" height="4" fill="#B0B8A8" />
<rect x="52" y="536" width="4" height="4" fill="#F2ECF4" />
<rect x="56" y="536" width="4" height="4" fill="#C0C8D8" />
<rect x="60" y="536" width="4" height="4" fill="#D8B0C0" />
<rect x="64" y="536" width="4" height="4" fill="#A3766F" />
<rect x="68" y="536" width="4" height="4" fill="#626883" />
<rect x="72" y="536" width="4" height="4" fill="#E4F0FA" />
<rect x="76" y="536" width="4" height="4" fill="#7C6F7C" />
<rect x="80" y="536" width="4" height="4" fill="#6890D8" />
<rect x="84" y="536" width="4" height="4" fill="#B0B8A8" />
<rect x="88" y="536" width="4" height="4" fill="#4E5BAA" />
<rect x="92" y="536" width="4" height="4" fill="#6F5B4E" />
<rect x="24" y="540" width="4" height="4" fill="#839090" />
<rect x="28" y="540" width="4" height="4" fill="#AA9090" />
<rect x="32" y="540" width="4" height="4" fill="#907C6F" />
<rect x="36" y="540" width="4" height="4" fill="#4E5BAA" />
<rect x="40" y="540" width="4" height="4" fill="#B8A8C8" />
<rect x="44" y="540" width="4" height="4" fill="#AA9090" />
<rect x="48" y="540" width="4" height="4" fill="#E6F6F6" />
<rect x="52" y="540" width="4" height="4" fill="#626883" />
<rect x="56" y="540" width="4" height="4" fill="#A8C0E0" />
<rect x="60" y="540" width="4" height="4" fill="#626883" />
<rect x="64" y="540" width="4" height="4" fill="#A8C0E0" />
<rect x="68" y="540" width="4" height="4" fill="#E4F0FA" />
<rect x="72" y="540" width="4" height="4" fill="#F0F4E0" />
<rect x="76" y="540" width="4" height="4" fill="#D8B8B8" />
<rect x="80" y="540" width="4" height="4" fill="#B0B8A8" />
<rect x="84" y="540" width="4" height="4" fill="#6876A3" />
<rect x="88" y="540" width="4" height="4" fill="#F2ECF4" />
<rect x="92" y="540" width="4" height="4" fill="#839090" />
<rect x="80" y="544" width="4" height="4" fill="#A880B0" />
<rect x="140" y="532" width="4" height="4" fill="#C8A878" />
<rect x="144" y="532" width="4" height="4" fill="#FFF0D8" />
<rect x="156" y="532" width="4" height="4" fill="#B8A8C8" />
<rect x="164" y="532" width="4" height="4" fill="#EEF8FF" />
<rect x="176" y="532" width="4" height="4" fill="#E6F6F6" />
<rect x="184" y="532" width="4" height="4" fill="#F2ECF4" />
<rect x="204" y="532" width="4" height="4" fill="#E6F6F6" />
<rect x="212" y="532" width="4" height="4" fill="#F0F4E0" />
<rect x="128" y="536" width="4" height="4" fill="#C8A878" />
<rect x="132" y="536" width="4" height="4" fill="#626883" />
<rect x="136" y="536" width="4" height="4" fill="#E6F6F6" />
<rect x="140" y="536" width="4" height="4" fill="#6876A3" />
<rect x="144" y="536" width="4" height="4" fill="#A880B0" />
<rect x="148" y="536" width="4" height="4" fill="#A3766F" />
<rect x="152" y="536" width="4" height="4" fill="#6876A3" />
<rect x="156" y="536" width="4" height="4" fill="#AA9090" />
<rect x="160" y="536" width="4" height="4" fill="#E6F6F6" />
<rect x="164" y="536" width="4" height="4" fill="#C8A878" />
<rect x="168" y="536" width="4" height="4" fill="#D8B0C0" />
<rect x="172" y="536" width="4" height="4" fill="#B8C8C0" />
<rect x="176" y="536" width="4" height="4" fill="#E6F6F6" />
<rect x="180" y="536" width="4" height="4" fill="#B8A8C8" />
<rect x="184" y="536" width="4" height="4" fill="#907C6F" />
<rect x="188" y="536" width="4" height="4" fill="#C0C8D8" />
<rect x="192" y="536" width="4" height="4" fill="#4E5BAA" />
<rect x="196" y="536" width="4" height="4" fill="#839090" />
<rect x="200" y="536" width="4" height="4" fill="#766889" />
<rect x="204" y="536" width="4" height="4" fill="#626883" />
<rect x="208" y="536" width="4" height="4" fill="#7C6F7C" />
<rect x="212" y="536" width="4" height="4" fill="#917C62" />
<rect x="216" y="536" width="4" height="4" fill="#B0B8A8" />
<rect x="220" y="536" width="4" height="4" fill="#B8A8C8" />
<rect x="128" y="540" width="4" height="4" fill="#6F5B4E" />
<rect x="132" y="540" width="4" height="4" fill="#B8A8C8" />
<rect x="136" y="540" width="4" height="4" fill="#98A8C0" />
<rect x="140" y="540" width="4" height="4" fill="#AA9090" />
<rect x="144" y="540" width="4" height="4" fill="#98A8C0" />
<rect x="148" y="540" width="4" height="4" fill="#A8A0B8" />
<rect x="152" y="540" width="4" height="4" fill="#A3766F" />
<rect x="156" y="540" width="4" height="4" fill="#6F9096" />
<rect x="160" y="540" width="4" height="4" fill="#E4F0FA" />
<rect x="164" y="540" width="4" height="4" fill="#6F5B4E" />
<rect x="168" y="540" width="4" height="4" fill="#C0C8D8" />
<rect x="172" y="540" width="4" height="4" fill="#D8B0C0" />
<rect x="176" y="540" width="4" height="4" fill="#917C62" />
<rect x="180" y="540" width="4" height="4" fill="#626883" />
<rect x="184" y="540" width="4" height="4" fill="#C8A878" />
<rect x="188" y="540" width="4" height="4" fill="#C8B8A8" />
<rect x="192" y="540" width="4" height="4" fill="#B8C8C0" />
<rect x="196" y="540" width="4" height="4" fill="#98A8C0" />
<rect x="200" y="540" width="4" height="4" fill="#626883" />
<rect x="204" y="540" width="4" height="4" fill="#D8B898" />
<rect x="208" y="540" width="4" height="4" fill="#C8A878" />
<rect x="212" y="540" width="4" height="4" fill="#C8B8A8" />
<rect x="216" y="540" width="4" height="4" fill="#FFF0D8" />
<rect x="220" y="540" width="4" height="4" fill="#AA9090" />
<rect x="128" y="544" width="4" height="4" fill="#98A8C0" />
<rect x="152" y="544" width="4" height="4" fill="#EEF8FF" />
<rect x="36" y="552" width="4" height="4" fill="#F0F4E0" />
<rect x="40" y="552" width="4" height="4" fill="#EEF8FF" />
<rect x="48" y="552" width="4" height="4" fill="#E6F6F6" />
<rect x="52" y="552" width="4" height="4" fill="#F0F4E0" />
<rect x="56" y="552" width="4" height="4" fill="#FFF4E2" />
<rect x="64" y="552" width="4" height="4" fill="#C8A878" />
<rect x="24" y="556" width="4" height="4" fill="#EEF8FF" />
<rect x="28" y="556" width="4" height="4" fill="#F2ECF4" />
<rect x="32" y="556" width="4" height="4" fill="#E6F6F6" />
<rect x="36" y="556" width="4" height="4" fill="#FFF4E2" />
<rect x="40" y="556" width="4" height="4" fill="#D8B8B8" />
<rect x="44" y="556" width="4" height="4" fill="#E6F6F6" />
<rect x="48" y="556" width="4" height="4" fill="#98A8C0" />
<rect x="52" y="556" width="4" height="4" fill="#A8C0E0" />
<rect x="56" y="556" width="4" height="4" fill="#A3766F" />
<rect x="60" y="556" width="4" height="4" fill="#D8B898" />
<rect x="64" y="556" width="4" height="4" fill="#C8B8A8" />
<rect x="24" y="560" width="4" height="4" fill="#C0C8D8" />
<rect x="28" y="560" width="4" height="4" fill="#D8B8B8" />
<rect x="32" y="560" width="4" height="4" fill="#917C62" />
<rect x="36" y="560" width="4" height="4" fill="#E6F6F6" />
<rect x="40" y="560" width="4" height="4" fill="#F6FAEA" />
<rect x="44" y="560" width="4" height="4" fill="#A880B0" />
<rect x="48" y="560" width="4" height="4" fill="#907C6F" />
<rect x="52" y="560" width="4" height="4" fill="#D8B0C0" />
<rect x="56" y="560" width="4" height="4" fill="#B8A8C8" />
<rect x="60" y="560" width="4" height="4" fill="#C8B8A8" />
<rect x="64" y="560" width="4" height="4" fill="#6F9096" />
<rect x="68" y="560" width="4" height="4" fill="#B8C8C0" />
<rect x="24" y="564" width="4" height="4" fill="#6890D8" />
<rect x="28" y="564" width="4" height="4" fill="#E4F0FA" />
<rect x="32" y="564" width="4" height="4" fill="#D8B898" />
<rect x="36" y="564" width="4" height="4" fill="#B0B8A8" />
<rect x="40" y="564" width="4" height="4" fill="#C8A878" />
<rect x="44" y="564" width="4" height="4" fill="#F6FAEA" />
<rect x="48" y="564" width="4" height="4" fill="#4E5BAA" />
<rect x="52" y="564" width="4" height="4" fill="#D8B8B8" />
<rect x="56" y="564" width="4" height="4" fill="#A8C0E0" />
<rect x="60" y="564" width="4" height="4" fill="#E6F6F6" />
<rect x="64" y="564" width="4" height="4" fill="#98A8C0" />
<rect x="68" y="564" width="4" height="4" fill="#B0B8A8" />
<rect x="176" y="552" width="4" height="4" fill="#EEF8FF" />
<rect x="180" y="552" width="4" height="4" fill="#B8A8C8" />
<rect x="128" y="556" width="4" height="4" fill="#839090" />
<rect x="132" y="556" width="4" height="4" fill="#C8B8A8" />
<rect x="136" y="556" width="4" height="4" fill="#E4F0FA" />
<rect x="140" y="556" width="4" height="4" fill="#98A8C0" />
<rect x="144" y="556" width="4" height="4" fill="#EEF8FF" />
<rect x="148" y="556" width="4" height="4" fill="#A3766F" />
<rect x="152" y="556" width="4" height="4" fill="#E6F6F6" />
<rect x="156" y="556" width="4" height="4" fill="#A880B0" />
<rect x="160" y="556" width="4" height="4" fill="#A8C0E0" />
<rect x="164" y="556" width="4" height="4" fill="#C0C8D8" />
<rect x="172" y="556" width="4" height="4" fill="#B8C8C0" />
<rect x="176" y="556" width="4" height="4" fill="#A8C0E0" />
<rect x="180" y="556" width="4" height="4" fill="#D8B8B8" />
<rect x="128" y="560" width="4" height="4" fill="#98A8C0" />
<rect x="132" y="560" width="4" height="4" fill="#836FB1" />
<rect x="136" y="560" width="4" height="4" fill="#6890D8" />
<rect x="140" y="560" width="4" height="4" fill="#B8A8C8" />
<rect x="144" y="560" width="4" height="4" fill="#98A8C0" />
<rect x="148" y="560" width="4" height="4" fill="#AA9090" />
<rect x="152" y="560" width="4" height="4" fill="#E4F0FA" />
<rect x="156" y="560" width="4" height="4" fill="#626883" />
<rect x="160" y="560" width="4" height="4" fill="#B8C8C0" />
<rect x="164" y="560" width="4" height="4" fill="#C8B8A8" />
<rect x="168" y="560" width="4" height="4" fill="#C0C8D8" />
<rect x="172" y="560" width="4" height="4" fill="#D8B898" />
<rect x="176" y="560" width="4" height="4" fill="#6F9096" />
<rect x="180" y="560" width="4" height="4" fill="#907C6F" />
<rect x="128" y="564" width="4" height="4" fill="#E4F0FA" />
<rect x="132" y="564" width="4" height="4" fill="#B8C8C0" />
<rect x="136" y="564" width="4" height="4" fill="#FFF4E2" />
<rect x="140" y="564" width="4" height="4" fill="#F0F4E0" />
<rect x="144" y="564" width="4" height="4" fill="#EEF8FF" />
<rect x="148" y="564" width="4" height="4" fill="#E6F6F6" />
<rect x="152" y="564" width="4" height="4" fill="#B8C8C0" />
<rect x="156" y="564" width="4" height="4" fill="#FFF0D8" />
<rect x="160" y="564" width="4" height="4" fill="#F2ECF4" />
<rect x="164" y="564" width="4" height="4" fill="#E6F6F6" />
<rect x="168" y="564" width="4" height="4" fill="#F2ECF4" />
<rect x="172" y="564" width="4" height="4" fill="#6890D8" />
<rect x="176" y="564" width="4" height="4" fill="#F2ECF4" />
<rect x="180" y="564" width="4" height="4" fill="#917C62" />
<rect x="24" y="576" width="4" height="4" fill="#F0F4E0" />
<rect x="28" y="576" width="4" height="4" fill="#D8B0C0" />
<rect x="32" y="576" width="4" height="4" fill="#D8B0C0" />
<rect x="40" y="576" width="4" height="4" fill="#F0F4E0" />
<rect x="44" y="576" width="4" height="4" fill="#D8B898" />
<rect x="48" y="576" width="4" height="4" fill="#B8A8C8" />
<rect x="52" y="576" width="4" height="4" fill="#FFF0D8" />
<rect x="56" y="576" width="4" height="4" fill="#E4F0FA" />
<rect x="64" y="576" width="4" height="4" fill="#FFF4E2" />
<rect x="68" y="576" width="4" height="4" fill="#F2ECF4" />
<rect x="72" y="576" width="4" height="4" fill="#839090" />
<rect x="76" y="576" width="4" height="4" fill="#F0F4E0" />
<rect x="80" y="576" width="4" height="4" fill="#F0F4E0" />
<rect x="84" y="576" width="4" height="4" fill="#D8B898" />
<rect x="88" y="576" width="4" height="4" fill="#F2ECF4" />
<rect x="24" y="580" width="4" height="4" fill="#A8C0E0" />
<rect x="28" y="580" width="4" height="4" fill="#917C62" />
<rect x="32" y="580" width="4" height="4" fill="#A8C0E0" />
<rect x="36" y="580" width="4" height="4" fill="#F2ECF4" />
<rect x="40" y="580" width="4" height="4" fill="#836FB1" />
<rect x="44" y="580" width="4" height="4" fill="#A8A0B8" />
<rect x="48" y="580" width="4" height="4" fill="#D8B898" />
<rect x="52" y="580" width="4" height="4" fill="#C0C8D8" />
<rect x="56" y="580" width="4" height="4" fill="#E4F0FA" />
<rect x="60" y="580" width="4" height="4" fill="#917C62" />
<rect x="64" y="580" width="4" height="4" fill="#6890D8" />
<rect x="68" y="580" width="4" height="4" fill="#AA9090" />
<rect x="72" y="580" width="4" height="4" fill="#6F9096" />
<rect x="76" y="580" width="4" height="4" fill="#836FB1" />
<rect x="80" y="580" width="4" height="4" fill="#D8B8B8" />
<rect x="84" y="580" width="4" height="4" fill="#98A8C0" />
<rect x="88" y="580" width="4" height="4" fill="#A3766F" />
<rect x="24" y="584" width="4" height="4" fill="#F0F4E0" />
<rect x="28" y="584" width="4" height="4" fill="#917C62" />
<rect x="32" y="584" width="4" height="4" fill="#D8B8B8" />
<rect x="36" y="584" width="4" height="4" fill="#6F5B4E" />
<rect x="40" y="584" width="4" height="4" fill="#A880B0" />
<rect x="44" y="584" width="4" height="4" fill="#FFF4E2" />
<rect x="48" y="584" width="4" height="4" fill="#B8C8C0" />
<rect x="56" y="584" width="4" height="4" fill="#E4F0FA" />
<rect x="60" y="584" width="4" height="4" fill="#EEF8FF" />
<rect x="64" y="584" width="4" height="4" fill="#839090" />
<rect x="68" y="584" width="4" height="4" fill="#A8A0B8" />
<rect x="72" y="584" width="4" height="4" fill="#F0F4E0" />
<rect x="76" y="584" width="4" height="4" fill="#E4F0FA" />
<rect x="80" y="584" width="4" height="4" fill="#C0C8D8" />
<rect x="84" y="584" width="4" height="4" fill="#6890D8" />
<rect x="88" y="584" width="4" height="4" fill="#B8C8C0" />
<rect x="32" y="588" width="4" height="4" fill="#B8C8C0" />
<rect x="68" y="588" width="4" height="4" fill="#A8A0B8" />
<rect x="84" y="588" width="4" height="4" fill="#C0C8D8" />
<rect x="28" y="596" width="4" height="4" fill="#B8A8C8" />
<rect x="52" y="596" width="4" height="4" fill="#F0F4E0" />
<rect x="60" y="596" width="4" height="4" fill="#E6F6F6" />
<rect x="64" y="596" width="4" height="4" fill="#EEF8FF" />
<rect x="72" y="596" width="4" height="4" fill="#E6F6F6" />
<rect x="84" y="596" width="4" height="4" fill="#F0F4E0" />
<rect x="96" y="596" width="4" height="4" fill="#F6FAEA" />
<rect x="100" y="596" width="4" height="4" fill="#F6FAEA" />
<rect x="24" y="600" width="4" height="4" fill="#A880B0" />
<rect x="28" y="600" width="4" height="4" fill="#FFF4E2" />
<rect x="32" y="600" width="4" height="4" fill="#98A8C0" />
<rect x="36" y="600" width="4" height="4" fill="#C8B8A8" />
<rect x="40" y="600" width="4" height="4" fill="#E4F0FA" />
<rect x="44" y="600" width="4" height="4" fill="#D8B0C0" />
<rect x="48" y="600" width="4" height="4" fill="#E4F0FA" />
<rect x="52" y="600" width="4" height="4" fill="#A880B0" />
<rect x="56" y="600" width="4" height="4" fill="#F6FAEA" />
<rect x="60" y="600" width="4" height="4" fill="#D8B8B8" />
<rect x="64" y="600" width="4" height="4" fill="#F2ECF4" />
<rect x="68" y="600" width="4" height="4" fill="#A880B0" />
<rect x="72" y="600" width="4" height="4" fill="#D8B0C0" />
<rect x="76" y="600" width="4" height="4" fill="#C8B8A8" />
<rect x="80" y="600" width="4" height="4" fill="#FFF4E2" />
<rect x="84" y="600" width="4" height="4" fill="#B0B8A8" />
<rect x="88" y="600" width="4" height="4" fill="#B8C8C0" />
<rect x="92" y="600" width="4" height="4" fill="#A8C0E0" />
<rect x="96" y="600" width="4" height="4" fill="#C8B8A8" />
<rect x="100" y="600" width="4" height="4" fill="#F2ECF4" />
<rect x="24" y="604" width="4" height="4" fill="#B8C8C0" />
<rect x="28" y="604" width="4" height="4" fill="#E4F0FA" />
<rect x="32" y="604" width="4" height="4" fill="#C8A878" />
<rect x="36" y="604" width="4" height="4" fill="#D8B0C0" />
<rect x="40" y="604" width="4" height="4" fill="#D8B898" />
<rect x="44" y="604" width="4" height="4" fill="#C8B8A8" />
<rect x="48" y="604" width="4" height="4" fill="#F0F4E0" />
<rect x="52" y="604" width="4" height="4" fill="#FFF4E2" />
<rect x="56" y="604" width="4" height="4" fill="#98A8C0" />
<rect x="60" y="604" width="4" height="4" fill="#C8A878" />
<rect x="64" y="604" width="4" height="4" fill="#6890D8" />
<rect x="68" y="604" width="4" height="4" fill="#D8B898" />
<rect x="72" y="604" width="4" height="4" fill="#907C6F" />
<rect x="76" y="604" width="4" height="4" fill="#B0B8A8" />
<rect x="80" y="604" width="4" height="4" fill="#C8A878" />
<rect x="84" y="604" width="4" height="4" fill="#A880B0" />
<rect x="88" y="604" width="4" height="4" fill="#6890D8" />
<rect x="92" y="604" width="4" height="4" fill="#F2ECF4" />
<rect x="96" y="604" width="4" height="4" fill="#C0C8D8" />
<rect x="100" y="604" width="4" height="4" fill="#A8A0B8" />
<rect x="52" y="608" width="4" height="4" fill="#C8B8A8" />
<rect x="60" y="608" width="4" height="4" fill="#FFF0D8" />
<rect x="72" y="608" width="4" height="4" fill="#D8B0C0" />
<rect x="128" y="600" width="4" height="4" fill="#EEF8FF" />
<rect x="132" y="600" width="4" height="4" fill="#A8C0E0" />
<rect x="136" y="600" width="4" height="4" fill="#B0B8A8" />
<rect x="140" y="600" width="4" height="4" fill="#D8B898" />
<rect x="144" y="600" width="4" height="4" fill="#4E5BAA" />
<rect x="148" y="600" width="4" height="4" fill="#B8A8C8" />
<rect x="152" y="600" width="4" height="4" fill="#6890D8" />
<rect x="156" y="600" width="4" height="4" fill="#EEF8FF" />
<rect x="160" y="600" width="4" height="4" fill="#A8A0B8" />
<rect x="164" y="600" width="4" height="4" fill="#D8B898" />
<rect x="168" y="600" width="4" height="4" fill="#D8B898" />
<rect x="172" y="600" width="4" height="4" fill="#FFF4E2" />
<rect x="176" y="600" width="4" height="4" fill="#F2ECF4" />
<rect x="180" y="600" width="4" height="4" fill="#836FB1" />
<rect x="184" y="600" width="4" height="4" fill="#B8A8C8" />
<rect x="128" y="604" width="4" height="4" fill="#F6FAEA" />
<rect x="132" y="604" width="4" height="4" fill="#E4F0FA" />
<rect x="136" y="604" width="4" height="4" fill="#EEF8FF" />
<rect x="140" y="604" width="4" height="4" fill="#6890D8" />
<rect x="144" y="604" width="4" height="4" fill="#6890D8" />
<rect x="148" y="604" width="4" height="4" fill="#FFF4E2" />
<rect x="152" y="604" width="4" height="4" fill="#A8C0E0" />
<rect x="156" y="604" width="4" height="4" fill="#F0F4E0" />
<rect x="160" y="604" width="4" height="4" fill="#D8B0C0" />
<rect x="164" y="604" width="4" height="4" fill="#FFF0D8" />
<rect x="168" y="604" width="4" height="4" fill="#C8A878" />
<rect x="172" y="604" width="4" height="4" fill="#E4F0FA" />
<rect x="176" y="604" width="4" height="4" fill="#FFF4E2" />
<rect x="180" y="604" width="4" height="4" fill="#E6F6F6" />
<rect x="184" y="604" width="4" height="4" fill="#D8B898" />
<rect x="28" y="616" width="4" height="4" fill="#E6F6F6" />
<rect x="52" y="616" width="4" height="4" fill="#C8B8A8" />
<rect x="24" y="620" width="4" height="4" fill="#917C62" />
<rect x="28" y="620" width="4" height="4" fill="#A8A0B8" />
<rect x="32" y="620" width="4" height="4" fill="#6876A3" />
<rect x="36" y="620" width="4" height="4" fill="#D8B8B8" />
<rect x="40" y="620" width="4" height="4" fill="#626883" />
<rect x="44" y="620" width="4" height="4" fill="#907C6F" />
<rect x="48" y="620" width="4" height="4" fill="#C0C8D8" />
<rect x="52" y="620" width="4" height="4" fill="#98A8C0" />
<rect x="56" y="620" width="4" height="4" fill="#A8A0B8" />
<rect x="24" y="624" width="4" height="4" fill="#839090" />
<rect x="28" y="624" width="4" height="4" fill="#4E5BAA" />
<rect x="32" y="624" width="4" height="4" fill="#C0C8D8" />
<rect x="36" y="624" width="4" height="4" fill="#D8B898" />
<rect x="40" y="624" width="4" height="4" fill="#6876A3" />
<rect x="44" y="624" width="4" height="4" fill="#7C6F7C" />
<rect x="48" y="624" width="4" height="4" fill="#A3766F" />
<rect x="52" y="624" width="4" height="4" fill="#A8A0B8" />
<rect x="56" y="624" width="4" height="4" fill="#98A8C0" />
<rect x="136" y="616" width="4" height="4" fill="#F0F4E0" />
<rect x="160" y="616" width="4" height="4" fill="#D8B0C0" />
<rect x="168" y="616" width="4" height="4" fill="#E6F6F6" />
<rect x="128" y="620" width="4" height="4" fill="#C8A878" />
<rect x="132" y="620" width="4" height="4" fill="#6890D8" />
<rect x="136" y="620" width="4" height="4" fill="#6F5B4E" />
<rect x="140" y="620" width="4" height="4" fill="#766889" />
<rect x="144" y="620" width="4" height="4" fill="#B8A8C8" />
<rect x="148" y="620" width="4" height="4" fill="#6F9096" />
<rect x="152" y="620" width="4" height="4" fill="#98A8C0" />
<rect x="156" y="620" width="4" height="4" fill="#FFF4E2" />
<rect x="160" y="620" width="4" height="4" fill="#A8C0E0" />
<rect x="164" y="620" width="4" height="4" fill="#AA9090" />
<rect x="168" y="620" width="4" height="4" fill="#A8C0E0" />
<rect x="172" y="620" width="4" height="4" fill="#6876A3" />
<rect x="128" y="624" width="4" height="4" fill="#836FB1" />
<rect x="132" y="624" width="4" height="4" fill="#A8C0E0" />
<rect x="136" y="624" width="4" height="4" fill="#907C6F" />
<rect x="140" y="624" width="4" height="4" fill="#6876A3" />
<rect x="144" y="624" width="4" height="4" fill="#B8C8C0" />
<rect x="148" y="624" width="4" height="4" fill="#836FB1" />
<rect x="152" y="624" width="4" height="4" fill="#C8A878" />
<rect x="156" y="624" width="4" height="4" fill="#6F9096" />
<rect x="160" y="624" width="4" height="4" fill="#766889" />
<rect x="164" y="624" width="4" height="4" fill="#7C6F7C" />
<rect x="168" y="624" width="4" height="4" fill="#A8C0E0" />
<rect x="172" y="624" width="4" height="4" fill="#907C6F" />
<rect x="40" y="636" width="4" height="4" fill="#F0F4E0" />
<rect x="52" y="636" width="4" height="4" fill="#F6FAEA" />
<rect x="24" y="640" width="4" height="4" fill="#C8B8A8" />
<rect x="28" y="640" width="4" height="4" fill="#A880B0" />
<rect x="36" y="640" width="4" height="4" fill="#FFF4E2" />
<rect x="44" y="640" width="4" height="4" fill="#839090" />
<rect x="48" y="640" width="4" height="4" fill="#EEF8FF" />
<rect x="52" y="640" width="4" height="4" fill="#6F5B4E" />
<rect x="56" y="640" width="4" height="4" fill="#98A8C0" />
<rect x="60" y="640" width="4" height="4" fill="#7C6F7C" />
<rect x="64" y="640" width="4" height="4" fill="#B0B8A8" />
<rect x="24" y="644" width="4" height="4" fill="#A3766F" />
<rect x="28" y="644" width="4" height="4" fill="#D8B8B8" />
<rect x="32" y="644" width="4" height="4" fill="#A8A0B8" />
<rect x="36" y="644" width="4" height="4" fill="#7C6F7C" />
<rect x="40" y="644" width="4" height="4" fill="#C8B8A8" />
<rect x="44" y="644" width="4" height="4" fill="#B0B8A8" />
<rect x="48" y="644" width="4" height="4" fill="#B8C8C0" />
<rect x="52" y="644" width="4" height="4" fill="#B8C8C0" />
<rect x="56" y="644" width="4" height="4" fill="#E6F6F6" />
<rect x="60" y="644" width="4" height="4" fill="#4E5BAA" />
<rect x="64" y="644" width="4" height="4" fill="#C8A878" />
<rect x="24" y="648" width="4" height="4" fill="#FFF4E2" />
<rect x="28" y="648" width="4" height="4" fill="#C8A878" />
<rect x="32" y="648" width="4" height="4" fill="#D8B8B8" />
<rect x="36" y="648" width="4" height="4" fill="#A8C0E0" />
<rect x="40" y="648" width="4" height="4" fill="#6F5B4E" />
<rect x="44" y="648" width="4" height="4" fill="#F0F4E0" />
<rect x="48" y="648" width="4" height="4" fill="#E6F6F6" />
<rect x="52" y="648" width="4" height="4" fill="#836FB1" />
<rect x="56" y="648" width="4" height="4" fill="#F2ECF4" />
<rect x="60" y="648" width="4" height="4" fill="#E6F6F6" />
<rect x="64" y="648" width="4" height="4" fill="#F0F4E0" />
<rect x="128" y="636" width="4" height="4" fill="#D8B898" />
<rect x="148" y="636" width="4" height="4" fill="#E6F6F6" />
<rect x="152" y="636" width="4" height="4" fill="#F2ECF4" />
<rect x="176" y="636" width="4" height="4" fill="#A8C0E0" />
<rect x="128" y="640" width="4" height="4" fill="#B8C8C0" />
<rect x="132" y="640" width="4" height="4" fill="#B0B8A8" />
<rect x="136" y="640" width="4" height="4" fill="#EEF8FF" />
<rect x="144" y="640" width="4" height="4" fill="#C0C8D8" />
<rect x="148" y="640" width="4" height="4" fill="#E6F6F6" />
<rect x="152" y="640" width="4" height="4" fill="#E4F0FA" />
<rect x="156" y="640" width="4" height="4" fill="#907C6F" />
<rect x="160" y="640" width="4" height="4" fill="#FFF0D8" />
<rect x="164" y="640" width="4" height="4" fill="#C8B8A8" />
<rect x="168" y="640" width="4" height="4" fill="#F2ECF4" />
<rect x="172" y="640" width="4" height="4" fill="#FFF4E2" />
<rect x="176" y="640" width="4" height="4" fill="#7C6F7C" />
<rect x="180" y="640" width="4" height="4" fill="#6890D8" />
<rect x="184" y="640" width="4" height="4" fill="#D8B8B8" />
<rect x="128" y="644" width="4" height="4" fill="#626883" />
<rect x="132" y="644" width="4" height="4" fill="#AA9090" />
<rect x="136" y="644" width="4" height="4" fill="#A880B0" />
<rect x="140" y="644" width="4" height="4" fill="#AA9090" />
<rect x="144" y="644" width="4" height="4" fill="#917C62" />
<rect x="148" y="644" width="4" height="4" fill="#907C6F" />
<rect x="152" y="644" width="4" height="4" fill="#836FB1" />
<rect x="156" y="644" width="4" height="4" fill="#839090" />
<rect x="160" y="644" width="4" height="4" fill="#A8C0E0" />
<rect x="164" y="644" width="4" height="4" fill="#836FB1" />
<rect x="168" y="644" width="4" height="4" fill="#EEF8FF" />
<rect x="172" y="644" width="4" height="4" fill="#7C6F7C" />
<rect x="176" y="644" width="4" height="4" fill="#D8B8B8" />
<rect x="180" y="644" width="4" height="4" fill="#C0C8D8" />
<rect x="184" y="644" width="4" height="4" fill="#626883" />
<rect x="128" y="648" width="4" height="4" fill="#A8A0B8" />
<rect x="132" y="648" width="4" height="4" fill="#D8B0C0" />
<rect x="136" y="648" width="4" height="4" fill="#E4F0FA" />
<rect x="140" y="648" width="4" height="4" fill="#B0B8A8" />
<rect x="144" y="648" width="4" height="4" fill="#917C62" />
<rect x="148" y="648" width="4" height="4" fill="#7C6F7C" />
<rect x="152" y="648" width="4" height="4" fill="#F2ECF4" />
<rect x="156" y="648" width="4" height="4" fill="#FFF0D8" />
<rect x="160" y="648" width="4" height="4" fill="#B0B8A8" />
<rect x="164" y="648" width="4" height="4" fill="#A8A0B8" />
<rect x="168" y="648" width="4" height="4" fill="#B8C8C0" />
<rect x="172" y="648" width="4" height="4" fill="#C0C8D8" />
<rect x="176" y="648" width="4" height="4" fill="#E4F0FA" />
<rect x="180" y="648" width="4" height="4" fill="#E6F6F6" />
<rect x="184" y="648" width="4" height="4" fill="#A8A0B8" />
<rect x="24" y="660" width="4" height="4" fill="#EEF8FF" />
<rect x="28" y="660" width="4" height="4" fill="#6890D8" />
<rect x="32" y="660" width="4" height="4" fill="#E6F6F6" />
<rect x="36" y="660" width="4" height="4" fill="#F0F4E0" />
<rect x="40" y="660" width="4" height="4" fill="#D8B0C0" />
<rect x="44" y="660" width="4" height="4" fill="#EEF8FF" />
<rect x="48" y="660" width="4" height="4" fill="#6876A3" />
<rect x="52" y="660" width="4" height="4" fill="#EEF8FF" />
<rect x="60" y="660" width="4" height="4" fill="#6890D8" />
<rect x="64" y="660" width="4" height="4" fill="#F2ECF4" />
<rect x="24" y="664" width="4" height="4" fill="#A8C0E0" />
<rect x="28" y="664" width="4" height="4" fill="#B8A8C8" />
<rect x="32" y="664" width="4" height="4" fill="#D8B898" />
<rect x="36" y="664" width="4" height="4" fill="#B8C8C0" />
<rect x="40" y="664" width="4" height="4" fill="#EEF8FF" />
<rect x="44" y="664" width="4" height="4" fill="#FFF4E2" />
<rect x="48" y="664" width="4" height="4" fill="#F2ECF4" />
<rect x="52" y="664" width="4" height="4" fill="#6890D8" />
<rect x="56" y="664" width="4" height="4" fill="#B0B8A8" />
<rect x="60" y="664" width="4" height="4" fill="#C0C8D8" />
<rect x="64" y="664" width="4" height="4" fill="#FFF0D8" />
<rect x="24" y="668" width="4" height="4" fill="#FFF0D8" />
<rect x="28" y="668" width="4" height="4" fill="#EEF8FF" />
<rect x="32" y="668" width="4" height="4" fill="#B8A8C8" />
<rect x="36" y="668" width="4" height="4" fill="#F2ECF4" />
<rect x="40" y="668" width="4" height="4" fill="#F0F4E0" />
<rect x="44" y="668" width="4" height="4" fill="#D8B8B8" />
<rect x="48" y="668" width="4" height="4" fill="#F0F4E0" />
<rect x="52" y="668" width="4" height="4" fill="#E4F0FA" />
<rect x="56" y="668" width="4" height="4" fill="#FFF4E2" />
<rect x="60" y="668" width="4" height="4" fill="#E4F0FA" />
<rect x="64" y="668" width="4" height="4" fill="#EEF8FF" />
<rect x="128" y="660" width="4" height="4" fill="#C8B8A8" />
<rect x="136" y="660" width="4" height="4" fill="#FFF0D8" />
<rect x="144" y="660" width="4" height="4" fill="#C8B8A8" />
<rect x="148" y="660" width="4" height="4" fill="#B8A8C8" />
<rect x="152" y="660" width="4" height="4" fill="#E6F6F6" />
<rect x="156" y="660" width="4" height="4" fill="#C0C8D8" />
<rect x="160" y="660" width="4" height="4" fill="#A8C0E0" />
<rect x="164" y="660" width="4" height="4" fill="#EEF8FF" />
<rect x="168" y="660" width="4" height="4" fill="#C8B8A8" />
<rect x="172" y="660" width="4" height="4" fill="#EEF8FF" />
<rect x="176" y="660" width="4" height="4" fill="#A880B0" />
<rect x="180" y="660" width="4" height="4" fill="#A8C0E0" />
<rect x="184" y="660" width="4" height="4" fill="#FFF4E2" />
<rect x="188" y="660" width="4" height="4" fill="#F0F4E0" />
<rect x="192" y="660" width="4" height="4" fill="#F6FAEA" />
<rect x="196" y="660" width="4" height="4" fill="#A8A0B8" />
<rect x="200" y="660" width="4" height="4" fill="#FFF4E2" />
<rect x="204" y="660" width="4" height="4" fill="#B8A8C8" />
<rect x="208" y="660" width="4" height="4" fill="#FFF0D8" />
<rect x="212" y="660" width="4" height="4" fill="#F2ECF4" />
<rect x="128" y="664" width="4" height="4" fill="#D8B898" />
<rect x="132" y="664" width="4" height="4" fill="#B8C8C0" />
<rect x="136" y="664" width="4" height="4" fill="#836FB1" />
<rect x="140" y="664" width="4" height="4" fill="#C8B8A8" />
<rect x="144" y="664" width="4" height="4" fill="#A8A0B8" />
<rect x="148" y="664" width="4" height="4" fill="#D8B8B8" />
<rect x="152" y="664" width="4" height="4" fill="#EEF8FF" />
<rect x="156" y="664" width="4" height="4" fill="#FFF0D8" />
<rect x="160" y="664" width="4" height="4" fill="#F6FAEA" />
<rect x="164" y="664" width="4" height="4" fill="#C8A878" />
<rect x="168" y="664" width="4" height="4" fill="#F6FAEA" />
<rect x="172" y="664" width="4" height="4" fill="#A8C0E0" />
<rect x="176" y="664" width="4" height="4" fill="#A880B0" />
<rect x="180" y="664" width="4" height="4" fill="#98A8C0" />
<rect x="184" y="664" width="4" height="4" fill="#C8A878" />
<rect x="188" y="664" width="4" height="4" fill="#E6F6F6" />
<rect x="192" y="664" width="4" height="4" fill="#6890D8" />
<rect x="196" y="664" width="4" height="4" fill="#FFF4E2" />
<rect x="200" y="664" width="4" height="4" fill="#A880B0" />
<rect x="204" y="664" width="4" height="4" fill="#C0C8D8" />
<rect x="208" y="664" width="4" height="4" fill="#98A8C0" />
<rect x="212" y="664" width="4" height="4" fill="#A880B0" />
<rect x="128" y="668" width="4" height="4" fill="#C0C8D8" />
<rect x="132" y="668" width="4" height="4" fill="#C8A878" />
<rect x="136" y="668" width="4" height="4" fill="#D8B0C0" />
<rect x="140" y="668" width="4" height="4" fill="#E4F0FA" />
<rect x="144" y="668" width="4" height="4" fill="#A880B0" />
<rect x="148" y="668" width="4" height="4" fill="#A880B0" />
<rect x="152" y="668" width="4" height="4" fill="#6890D8" />
<rect x="156" y="668" width="4" height="4" fill="#C0C8D8" />
<rect x="160" y="668" width="4" height="4" fill="#E4F0FA" />
<rect x="164" y="668" width="4" height="4" fill="#D8B898" />
<rect x="172" y="668" width="4" height="4" fill="#E4F0FA" />
<rect x="176" y="668" width="4" height="4" fill="#C8B8A8" />
<rect x="180" y="668" width="4" height="4" fill="#D8B898" />
<rect x="184" y="668" width="4" height="4" fill="#E4F0FA" />
<rect x="188" y="668" width="4" height="4" fill="#C8A878" />
<rect x="192" y="668" width="4" height="4" fill="#FFF0D8" />
<rect x="196" y="668" width="4" height="4" fill="#E4F0FA" />
<rect x="200" y="668" width="4" height="4" fill="#C8A878" />
<rect x="204" y="668" width="4" height="4" fill="#98A8C0" />
<rect x="208" y="668" width="4" height="4" fill="#D8B8B8" />
<rect x="212" y="668" width="4" height="4" fill="#FFF4E2" />
<rect x="188" y="672" width="4" height="4" fill="#A8A0B8" />
<rect x="24" y="680" width="4" height="4" fill="#F2ECF4" />
<rect x="40" y="680" width="4" height="4" fill="#FFF4E2" />
<rect x="56" y="680" width="4" height="4" fill="#E4F0FA" />
<rect x="24" y="684" width="4" height="4" fill="#E6F6F6" />
<rect x="28" y="684" width="4" height="4" fill="#6890D8" />
<rect x="32" y="684" width="4" height="4" fill="#B8C8C0" />
<rect x="36" y="684" width="4" height="4" fill="#6F9096" />
<rect x="40" y="684" width="4" height="4" fill="#F2ECF4" />
<rect x="44" y="684" width="4" height="4" fill="#A8A0B8" />
<rect x="48" y="684" width="4" height="4" fill="#A880B0" />
<rect x="52" y="684" width="4" height="4" fill="#A8C0E0" />
<rect x="56" y="684" width="4" height="4" fill="#C8A878" />
<rect x="60" y="684" width="4" height="4" fill="#EEF8FF" />
<rect x="64" y="684" width="4" height="4" fill="#E4F0FA" />
<rect x="68" y="684" width="4" height="4" fill="#A880B0" />
<rect x="24" y="688" width="4" height="4" fill="#6876A3" />
<rect x="28" y="688" width="4" height="4" fill="#D8B898" />
<rect x="32" y="688" width="4" height="4" fill="#917C62" />
<rect x="36" y="688" width="4" height="4" fill="#6890D8" />
<rect x="40" y="688" width="4" height="4" fill="#A3766F" />
<rect x="44" y="688" width="4" height="4" fill="#C8A878" />
<rect x="48" y="688" width="4" height="4" fill="#D8B0C0" />
<rect x="52" y="688" width="4" height="4" fill="#836FB1" />
<rect x="56" y="688" width="4" height="4" fill="#A3766F" />
<rect x="60" y="688" width="4" height="4" fill="#F2ECF4" />
<rect x="64" y="688" width="4" height="4" fill="#C8B8A8" />
<rect x="68" y="688" width="4" height="4" fill="#F2ECF4" />
<rect x="28" y="692" width="4" height="4" fill="#B0B8A8" />
<rect x="128" y="680" width="4" height="4" fill="#D8B8B8" />
<rect x="152" y="680" width="4" height="4" fill="#E4F0FA" />
<rect x="168" y="680" width="4" height="4" fill="#E6F6F6" />
<rect x="180" y="680" width="4" height="4" fill="#F6FAEA" />
<rect x="188" y="680" width="4" height="4" fill="#EEF8FF" />
<rect x="128" y="684" width="4" height="4" fill="#D8B8B8" />
<rect x="132" y="684" width="4" height="4" fill="#907C6F" />
<rect x="136" y="684" width="4" height="4" fill="#7C6F7C" />
<rect x="140" y="684" width="4" height="4" fill="#E4F0FA" />
<rect x="144" y="684" width="4" height="4" fill="#A8A0B8" />
<rect x="148" y="684" width="4" height="4" fill="#A3766F" />
<rect x="152" y="684" width="4" height="4" fill="#836FB1" />
<rect x="156" y="684" width="4" height="4" fill="#6F5B4E" />
<rect x="160" y="684" width="4" height="4" fill="#C0C8D8" />
<rect x="164" y="684" width="4" height="4" fill="#917C62" />
<rect x="168" y="684" width="4" height="4" fill="#839090" />
<rect x="172" y="684" width="4" height="4" fill="#4E5BAA" />
<rect x="176" y="684" width="4" height="4" fill="#C8A878" />
<rect x="180" y="684" width="4" height="4" fill="#E4F0FA" />
<rect x="184" y="684" width="4" height="4" fill="#C0C8D8" />
<rect x="188" y="684" width="4" height="4" fill="#7C6F7C" />
<rect x="192" y="684" width="4" height="4" fill="#6F5B4E" />
<rect x="128" y="688" width="4" height="4" fill="#6876A3" />
<rect x="132" y="688" width="4" height="4" fill="#FFF0D8" />
<rect x="136" y="688" width="4" height="4" fill="#6890D8" />
<rect x="140" y="688" width="4" height="4" fill="#907C6F" />
<rect x="144" y="688" width="4" height="4" fill="#E6F6F6" />
<rect x="148" y="688" width="4" height="4" fill="#F6FAEA" />
<rect x="152" y="688" width="4" height="4" fill="#7C6F7C" />
<rect x="156" y="688" width="4" height="4" fill="#917C62" />
<rect x="160" y="688" width="4" height="4" fill="#626883" />
<rect x="164" y="688" width="4" height="4" fill="#6890D8" />
<rect x="168" y="688" width="4" height="4" fill="#D8B8B8" />
<rect x="172" y="688" width="4" height="4" fill="#C8B8A8" />
<rect x="176" y="688" width="4" height="4" fill="#C8B8A8" />
<rect x="180" y="688" width="4" height="4" fill="#766889" />
<rect x="184" y="688" width="4" height="4" fill="#B8C8C0" />
<rect x="188" y="688" width="4" height="4" fill="#D8B8B8" />
<rect x="192" y="688" width="4" height="4" fill="#4E5BAA" />
<rect x="176" y="692" width="4" height="4" fill="#A880B0" />
<rect x="28" y="700" width="4" height="4" fill="#6890D8" />
<rect x="32" y="700" width="4" height="4" fill="#B0B8A8" />
<rect x="40" y="700" width="4" height="4" fill="#E6F6F6" />
<rect x="52" y="700" width="4" height="4" fill="#F2ECF4" />
<rect x="60" y="700" width="4" height="4" fill="#F6FAEA" />
<rect x="24" y="704" width="4" height="4" fill="#6F5B4E" />
<rect x="28" y="704" width="4" height="4" fill="#D8B8B8" />
<rect x="32" y="704" width="4" height="4" fill="#A3766F" />
<rect x="36" y="704" width="4" height="4" fill="#D8B898" />
<rect x="40" y="704" width="4" height="4" fill="#626883" />
<rect x="44" y="704" width="4" height="4" fill="#A8C0E0" />
<rect x="48" y="704" width="4" height="4" fill="#A880B0" />
<rect x="52" y="704" width="4" height="4" fill="#C8A878" />
<rect x="56" y="704" width="4" height="4" fill="#FFF0D8" />
<rect x="60" y="704" width="4" height="4" fill="#4E5BAA" />
<rect x="64" y="704" width="4" height="4" fill="#A880B0" />
<rect x="24" y="708" width="4" height="4" fill="#6890D8" />
<rect x="28" y="708" width="4" height="4" fill="#B8A8C8" />
<rect x="32" y="708" width="4" height="4" fill="#6F9096" />
<rect x="36" y="708" width="4" height="4" fill="#A880B0" />
<rect x="40" y="708" width="4" height="4" fill="#D8B0C0" />
<rect x="44" y="708" width="4" height="4" fill="#836FB1" />
<rect x="48" y="708" width="4" height="4" fill="#6890D8" />
<rect x="52" y="708" width="4" height="4" fill="#B0B8A8" />
<rect x="56" y="708" width="4" height="4" fill="#A880B0" />
<rect x="60" y="708" width="4" height="4" fill="#A8C0E0" />
<rect x="64" y="708" width="4" height="4" fill="#6F9096" />
<rect x="52" y="712" width="4" height="4" fill="#A8C0E0" />
<rect x="132" y="700" width="4" height="4" fill="#F6FAEA" />
<rect x="152" y="700" width="4" height="4" fill="#F0F4E0" />
<rect x="160" y="700" width="4" height="4" fill="#F2ECF4" />
<rect x="172" y="700" width="4" height="4" fill="#F0F4E0" />
<rect x="180" y="700" width="4" height="4" fill="#EEF8FF" />
<rect x="128" y="704" width="4" height="4" fill="#7C6F7C" />
<rect x="132" y="704" width="4" height="4" fill="#907C6F" />
<rect x="136" y="704" width="4" height="4" fill="#626883" />
<rect x="140" y="704" width="4" height="4" fill="#C0C8D8" />
<rect x="144" y="704" width="4" height="4" fill="#A8C0E0" />
<rect x="148" y="704" width="4" height="4" fill="#A8A0B8" />
<rect x="152" y="704" width="4" height="4" fill="#AA9090" />
<rect x="156" y="704" width="4" height="4" fill="#AA9090" />
<rect x="160" y="704" width="4" height="4" fill="#7C6F7C" />
<rect x="164" y="704" width="4" height="4" fill="#D8B898" />
<rect x="168" y="704" width="4" height="4" fill="#F0F4E0" />
<rect x="172" y="704" width="4" height="4" fill="#6F9096" />
<rect x="176" y="704" width="4" height="4" fill="#B8C8C0" />
<rect x="180" y="704" width="4" height="4" fill="#F0F4E0" />
<rect x="184" y="704" width="4" height="4" fill="#4E5BAA" />
<rect x="188" y="704" width="4" height="4" fill="#A8C0E0" />
<rect x="192" y="704" width="4" height="4" fill="#6F9096" />
<rect x="128" y="708" width="4" height="4" fill="#98A8C0" />
<rect x="132" y="708" width="4" height="4" fill="#A8C0E0" />
<rect x="136" y="708" width="4" height="4" fill="#4E5BAA" />
<rect x="140" y="708" width="4" height="4" fill="#E6F6F6" />
<rect x="144" y="708" width="4" height="4" fill="#C8B8A8" />
<rect x="148" y="708" width="4" height="4" fill="#D8B898" />
<rect x="152" y="708" width="4" height="4" fill="#4E5BAA" />
<rect x="156" y="708" width="4" height="4" fill="#A880B0" />
<rect x="160" y="708" width="4" height="4" fill="#A8A0B8" />
<rect x="164" y="708" width="4" height="4" fill="#D8B898" />
<rect x="168" y="708" width="4" height="4" fill="#626883" />
<rect x="172" y="708" width="4" height="4" fill="#D8B8B8" />
<rect x="176" y="708" width="4" height="4" fill="#D8B8B8" />
<rect x="180" y="708" width="4" height="4" fill="#A3766F" />
<rect x="184" y="708" width="4" height="4" fill="#626883" />
<rect x="188" y="708" width="4" height="4" fill="#B8C8C0" />
<rect x="192" y="708" width="4" height="4" fill="#6F5B4E" />
<rect x="184" y="712" width="4" height="4" fill="#F0F4E0" />
<rect x="32" y="720" width="4" height="4" fill="#C0C8D8" />
<rect x="48" y="720" width="4" height="4" fill="#C8B8A8" />
<rect x="56" y="720" width="4" height="4" fill="#F6FAEA" />
<rect x="24" y="724" width="4" height="4" fill="#FFF4E2" />
<rect x="28" y="724" width="4" height="4" fill="#D8B8B8" />
<rect x="32" y="724" width="4" height="4" fill="#FFF0D8" />
<rect x="36" y="724" width="4" height="4" fill="#A8A0B8" />
<rect x="40" y="724" width="4" height="4" fill="#C8B8A8" />
<rect x="44" y="724" width="4" height="4" fill="#6890D8" />
<rect x="48" y="724" width="4" height="4" fill="#F0F4E0" />
<rect x="52" y="724" width="4" height="4" fill="#C0C8D8" />
<rect x="56" y="724" width="4" height="4" fill="#A8C0E0" />
<rect x="60" y="724" width="4" height="4" fill="#907C6F" />
<rect x="64" y="724" width="4" height="4" fill="#F6FAEA" />
<rect x="24" y="728" width="4" height="4" fill="#B0B8A8" />
<rect x="28" y="728" width="4" height="4" fill="#D8B0C0" />
<rect x="32" y="728" width="4" height="4" fill="#839090" />
<rect x="36" y="728" width="4" height="4" fill="#D8B8B8" />
<rect x="40" y="728" width="4" height="4" fill="#B8A8C8" />
<rect x="44" y="728" width="4" height="4" fill="#B8C8C0" />
<rect x="48" y="728" width="4" height="4" fill="#EEF8FF" />
<rect x="52" y="728" width="4" height="4" fill="#A880B0" />
<rect x="56" y="728" width="4" height="4" fill="#A8C0E0" />
<rect x="60" y="728" width="4" height="4" fill="#A3766F" />
<rect x="64" y="728" width="4" height="4" fill="#A8C0E0" />
<rect x="24" y="732" width="4" height="4" fill="#C8B8A8" />
<rect x="28" y="732" width="4" height="4" fill="#6F5B4E" />
<rect x="32" y="732" width="4" height="4" fill="#E6F6F6" />
<rect x="36" y="732" width="4" height="4" fill="#D8B898" />
<rect x="40" y="732" width="4" height="4" fill="#6F9096" />
<rect x="44" y="732" width="4" height="4" fill="#4E5BAA" />
<rect x="48" y="732" width="4" height="4" fill="#D8B8B8" />
<rect x="52" y="732" width="4" height="4" fill="#917C62" />
<rect x="56" y="732" width="4" height="4" fill="#E6F6F6" />
<rect x="60" y="732" width="4" height="4" fill="#F0F4E0" />
<rect x="64" y="732" width="4" height="4" fill="#D8B0C0" />
<rect x="140" y="720" width="4" height="4" fill="#FFF4E2" />
<rect x="204" y="720" width="4" height="4" fill="#F2ECF4" />
<rect x="128" y="724" width="4" height="4" fill="#4E5BAA" />
<rect x="132" y="724" width="4" height="4" fill="#F2ECF4" />
<rect x="136" y="724" width="4" height="4" fill="#D8B0C0" />
<rect x="140" y="724" width="4" height="4" fill="#C0C8D8" />
<rect x="144" y="724" width="4" height="4" fill="#98A8C0" />
<rect x="148" y="724" width="4" height="4" fill="#C0C8D8" />
<rect x="156" y="724" width="4" height="4" fill="#6876A3" />
<rect x="160" y="724" width="4" height="4" fill="#C8B8A8" />
<rect x="164" y="724" width="4" height="4" fill="#C8A878" />
<rect x="168" y="724" width="4" height="4" fill="#EEF8FF" />
<rect x="172" y="724" width="4" height="4" fill="#6890D8" />
<rect x="176" y="724" width="4" height="4" fill="#C8A878" />
<rect x="180" y="724" width="4" height="4" fill="#FFF4E2" />
<rect x="184" y="724" width="4" height="4" fill="#E4F0FA" />
<rect x="192" y="724" width="4" height="4" fill="#F6FAEA" />
<rect x="196" y="724" width="4" height="4" fill="#6F5B4E" />
<rect x="200" y="724" width="4" height="4" fill="#6890D8" />
<rect x="204" y="724" width="4" height="4" fill="#A8C0E0" />
<rect x="208" y="724" width="4" height="4" fill="#F0F4E0" />
<rect x="212" y="724" width="4" height="4" fill="#A8C0E0" />
<rect x="220" y="724" width="4" height="4" fill="#FFF4E2" />
<rect x="128" y="728" width="4" height="4" fill="#6890D8" />
<rect x="132" y="728" width="4" height="4" fill="#917C62" />
<rect x="136" y="728" width="4" height="4" fill="#6F5B4E" />
<rect x="140" y="728" width="4" height="4" fill="#917C62" />
<rect x="144" y="728" width="4" height="4" fill="#B8A8C8" />
<rect x="148" y="728" width="4" height="4" fill="#D8B898" />
<rect x="152" y="728" width="4" height="4" fill="#907C6F" />
<rect x="156" y="728" width="4" height="4" fill="#626883" />
<rect x="160" y="728" width="4" height="4" fill="#C8B8A8" />
<rect x="164" y="728" width="4" height="4" fill="#B0B8A8" />
<rect x="168" y="728" width="4" height="4" fill="#4E5BAA" />
<rect x="172" y="728" width="4" height="4" fill="#6890D8" />
<rect x="176" y="728" width="4" height="4" fill="#6F9096" />
<rect x="180" y="728" width="4" height="4" fill="#FFF4E2" />
<rect x="184" y="728" width="4" height="4" fill="#C8B8A8" />
<rect x="188" y="728" width="4" height="4" fill="#A880B0" />
<rect x="192" y="728" width="4" height="4" fill="#4E5BAA" />
<rect x="196" y="728" width="4" height="4" fill="#7C6F7C" />
<rect x="200" y="728" width="4" height="4" fill="#D8B8B8" />
<rect x="204" y="728" width="4" height="4" fill="#D8B898" />
<rect x="208" y="728" width="4" height="4" fill="#4E5BAA" />
<rect x="212" y="728" width="4" height="4" fill="#98A8C0" />
<rect x="216" y="728" width="4" height="4" fill="#A8A0B8" />
<rect x="220" y="728" width="4" height="4" fill="#D8B8B8" />
<rect x="128" y="732" width="4" height="4" fill="#A8C0E0" />
<rect x="132" y="732" width="4" height="4" fill="#C8A878" />
<rect x="136" y="732" width="4" height="4" fill="#EEF8FF" />
<rect x="140" y="732" width="4" height="4" fill="#F2ECF4" />
<rect x="144" y="732" width="4" height="4" fill="#F0F4E0" />
<rect x="148" y="732" width="4" height="4" fill="#D8B0C0" />
<rect x="152" y="732" width="4" height="4" fill="#F2ECF4" />
<rect x="156" y="732" width="4" height="4" fill="#839090" />
<rect x="160" y="732" width="4" height="4" fill="#EEF8FF" />
<rect x="164" y="732" width="4" height="4" fill="#E6F6F6" />
<rect x="168" y="732" width="4" height="4" fill="#C8B8A8" />
<rect x="172" y="732" width="4" height="4" fill="#C8B8A8" />
<rect x="176" y="732" width="4" height="4" fill="#B0B8A8" />
<rect x="180" y="732" width="4" height="4" fill="#F2ECF4" />
<rect x="188" y="732" width="4" height="4" fill="#6890D8" />
<rect x="192" y="732" width="4" height="4" fill="#E6F6F6" />
<rect x="196" y="732" width="4" height="4" fill="#D8B0C0" />
<rect x="200" y="732" width="4" height="4" fill="#E4F0FA" />
<rect x="204" y="732" width="4" height="4" fill="#D8B898" />
<rect x="208" y="732" width="4" height="4" fill="#E6F6F6" />
<rect x="212" y="732" width="4" height="4" fill="#A880B0" />
<rect x="216" y="732" width="4" height="4" fill="#A8A0B8" />
<rect x="220" y="732" width="4" height="4" fill="#F6FAEA" />
<rect x="24" y="744" width="4" height="4" fill="#D8B8B8" />
<rect x="28" y="744" width="4" height="4" fill="#F2ECF4" />
<rect x="32" y="744" width="4" height="4" fill="#B8A8C8" />
<rect x="36" y="744" width="4" height="4" fill="#E6F6F6" />
<rect x="40" y="744" width="4" height="4" fill="#C8B8A8" />
<rect x="44" y="744" width="4" height="4" fill="#E6F6F6" />
<rect x="48" y="744" width="4" height="4" fill="#E6F6F6" />
<rect x="24" y="748" width="4" height="4" fill="#6890D8" />
<rect x="28" y="748" width="4" height="4" fill="#6890D8" />
<rect x="32" y="748" width="4" height="4" fill="#B0B8A8" />
<rect x="36" y="748" width="4" height="4" fill="#FFF4E2" />
<rect x="40" y="748" width="4" height="4" fill="#EEF8FF" />
<rect x="44" y="748" width="4" height="4" fill="#6890D8" />
<rect x="48" y="748" width="4" height="4" fill="#98A8C0" />
<rect x="24" y="752" width="4" height="4" fill="#D8B8B8" />
<rect x="28" y="752" width="4" height="4" fill="#FFF4E2" />
<rect x="32" y="752" width="4" height="4" fill="#F6FAEA" />
<rect x="36" y="752" width="4" height="4" fill="#C8B8A8" />
<rect x="44" y="752" width="4" height="4" fill="#FFF4E2" />
<rect x="48" y="752" width="4" height="4" fill="#F6FAEA" />
<rect x="128" y="744" width="4" height="4" fill="#A8C0E0" />
<rect x="132" y="744" width="4" height="4" fill="#E4F0FA" />
<rect x="136" y="744" width="4" height="4" fill="#F6FAEA" />
<rect x="140" y="744" width="4" height="4" fill="#FFF0D8" />
<rect x="144" y="744" width="4" height="4" fill="#FFF4E2" />
<rect x="148" y="744" width="4" height="4" fill="#B0B8A8" />
<rect x="152" y="744" width="4" height="4" fill="#D8B8B8" />
<rect x="156" y="744" width="4" height="4" fill="#C8B8A8" />
<rect x="160" y="744" width="4" height="4" fill="#C8B8A8" />
<rect x="164" y="744" width="4" height="4" fill="#F0F4E0" />
<rect x="168" y="744" width="4" height="4" fill="#E6F6F6" />
<rect x="172" y="744" width="4" height="4" fill="#C8A878" />
<rect x="176" y="744" width="4" height="4" fill="#F0F4E0" />
<rect x="180" y="744" width="4" height="4" fill="#C8B8A8" />
<rect x="128" y="748" width="4" height="4" fill="#E6F6F6" />
<rect x="132" y="748" width="4" height="4" fill="#C8B8A8" />
<rect x="136" y="748" width="4" height="4" fill="#AA9090" />
<rect x="140" y="748" width="4" height="4" fill="#7C6F7C" />
<rect x="144" y="748" width="4" height="4" fill="#B8C8C0" />
<rect x="148" y="748" width="4" height="4" fill="#E4F0FA" />
<rect x="152" y="748" width="4" height="4" fill="#C8A878" />
<rect x="156" y="748" width="4" height="4" fill="#839090" />
<rect x="160" y="748" width="4" height="4" fill="#C8A878" />
<rect x="164" y="748" width="4" height="4" fill="#AA9090" />
<rect x="168" y="748" width="4" height="4" fill="#A8C0E0" />
<rect x="172" y="748" width="4" height="4" fill="#839090" />
<rect x="176" y="748" width="4" height="4" fill="#839090" />
<rect x="180" y="748" width="4" height="4" fill="#A8C0E0" />
<rect x="128" y="752" width="4" height="4" fill="#F2ECF4" />
<rect x="132" y="752" width="4" height="4" fill="#E4F0FA" />
<rect x="140" y="752" width="4" height="4" fill="#A8A0B8" />
<rect x="144" y="752" width="4" height="4" fill="#C0C8D8" />
<rect x="148" y="752" width="4" height="4" fill="#D8B898" />
<rect x="152" y="752" width="4" height="4" fill="#98A8C0" />
<rect x="156" y="752" width="4" height="4" fill="#C8B8A8" />
<rect x="160" y="752" width="4" height="4" fill="#FFF4E2" />
<rect x="164" y="752" width="4" height="4" fill="#B0B8A8" />
<rect x="168" y="752" width="4" height="4" fill="#A8C0E0" />
<rect x="172" y="752" width="4" height="4" fill="#F2ECF4" />
<rect x="176" y="752" width="4" height="4" fill="#E6F6F6" />
<rect x="180" y="752" width="4" height="4" fill="#C8A878" />
<rect x="164" y="756" width="4" height="4" fill="#C0C8D8" />
<rect x="40" y="764" width="4" height="4" fill="#F6FAEA" />
<rect x="48" y="764" width="4" height="4" fill="#EEF8FF" />
<rect x="52" y="764" width="4" height="4" fill="#6890D8" />
<rect x="136" y="764" width="4" height="4" fill="#F0F4E0" />
<rect x="21" y="769" width="1" height="1" fill="#9098A8" />
<rect x="21" y="770" width="1" height="2" fill="#6A7080" />
<rect x="25" y="769" width="5" height="1" fill="#9098A8" />
<rect x="25" y="770" width="1" height="2" fill="#6A7080" />
<rect x="31" y="769" width="1" height="1" fill="#9098A8" />
<rect x="31" y="770" width="1" height="2" fill="#6A7080" />
<rect x="34" y="769" width="4" height="1" fill="#9098A8" />
<rect x="34" y="770" width="1" height="2" fill="#6A7080" />
<rect x="40" y="769" width="3" height="1" fill="#9098A8" />
<rect x="40" y="770" width="1" height="2" fill="#6A7080" />
<rect x="45" y="769" width="1" height="1" fill="#9098A8" />
<rect x="45" y="770" width="1" height="2" fill="#6A7080" />
<rect x="48" y="769" width="4" height="1" fill="#9098A8" />
<rect x="48" y="770" width="1" height="2" fill="#6A7080" />
<rect x="53" y="769" width="3" height="1" fill="#9098A8" />
<rect x="53" y="770" width="1" height="2" fill="#6A7080" />
<rect x="128" y="769" width="4" height="1" fill="#9098A8" />
<rect x="128" y="770" width="1" height="2" fill="#6A7080" />
<rect x="134" y="769" width="4" height="1" fill="#9098A8" />
<rect x="134" y="770" width="1" height="2" fill="#6A7080" />
<rect x="139" y="769" width="3" height="1" fill="#9098A8" />
<rect x="139" y="770" width="1" height="2" fill="#6A7080" />
<rect x="146" y="769" width="5" height="1" fill="#9098A8" />
<rect x="146" y="770" width="1" height="2" fill="#6A7080" />
<rect x="153" y="769" width="4" height="1" fill="#9098A8" />
<rect x="153" y="770" width="1" height="2" fill="#6A7080" />
<rect x="158" y="769" width="1" height="1" fill="#9098A8" />
<rect x="158" y="770" width="1" height="2" fill="#6A7080" />
<rect x="161" y="769" width="4" height="1" fill="#9098A8" />
<rect x="161" y="770" width="1" height="2" fill="#6A7080" />
<rect x="167" y="769" width="1" height="1" fill="#9098A8" />
<rect x="167" y="770" width="1" height="2" fill="#6A7080" />
<rect x="170" y="769" width="4" height="1" fill="#9098A8" />
<rect x="170" y="770" width="1" height="2" fill="#6A7080" />
<rect x="177" y="769" width="5" height="1" fill="#9098A8" />
<rect x="177" y="770" width="1" height="2" fill="#6A7080" />
</svg>
</body></html>
